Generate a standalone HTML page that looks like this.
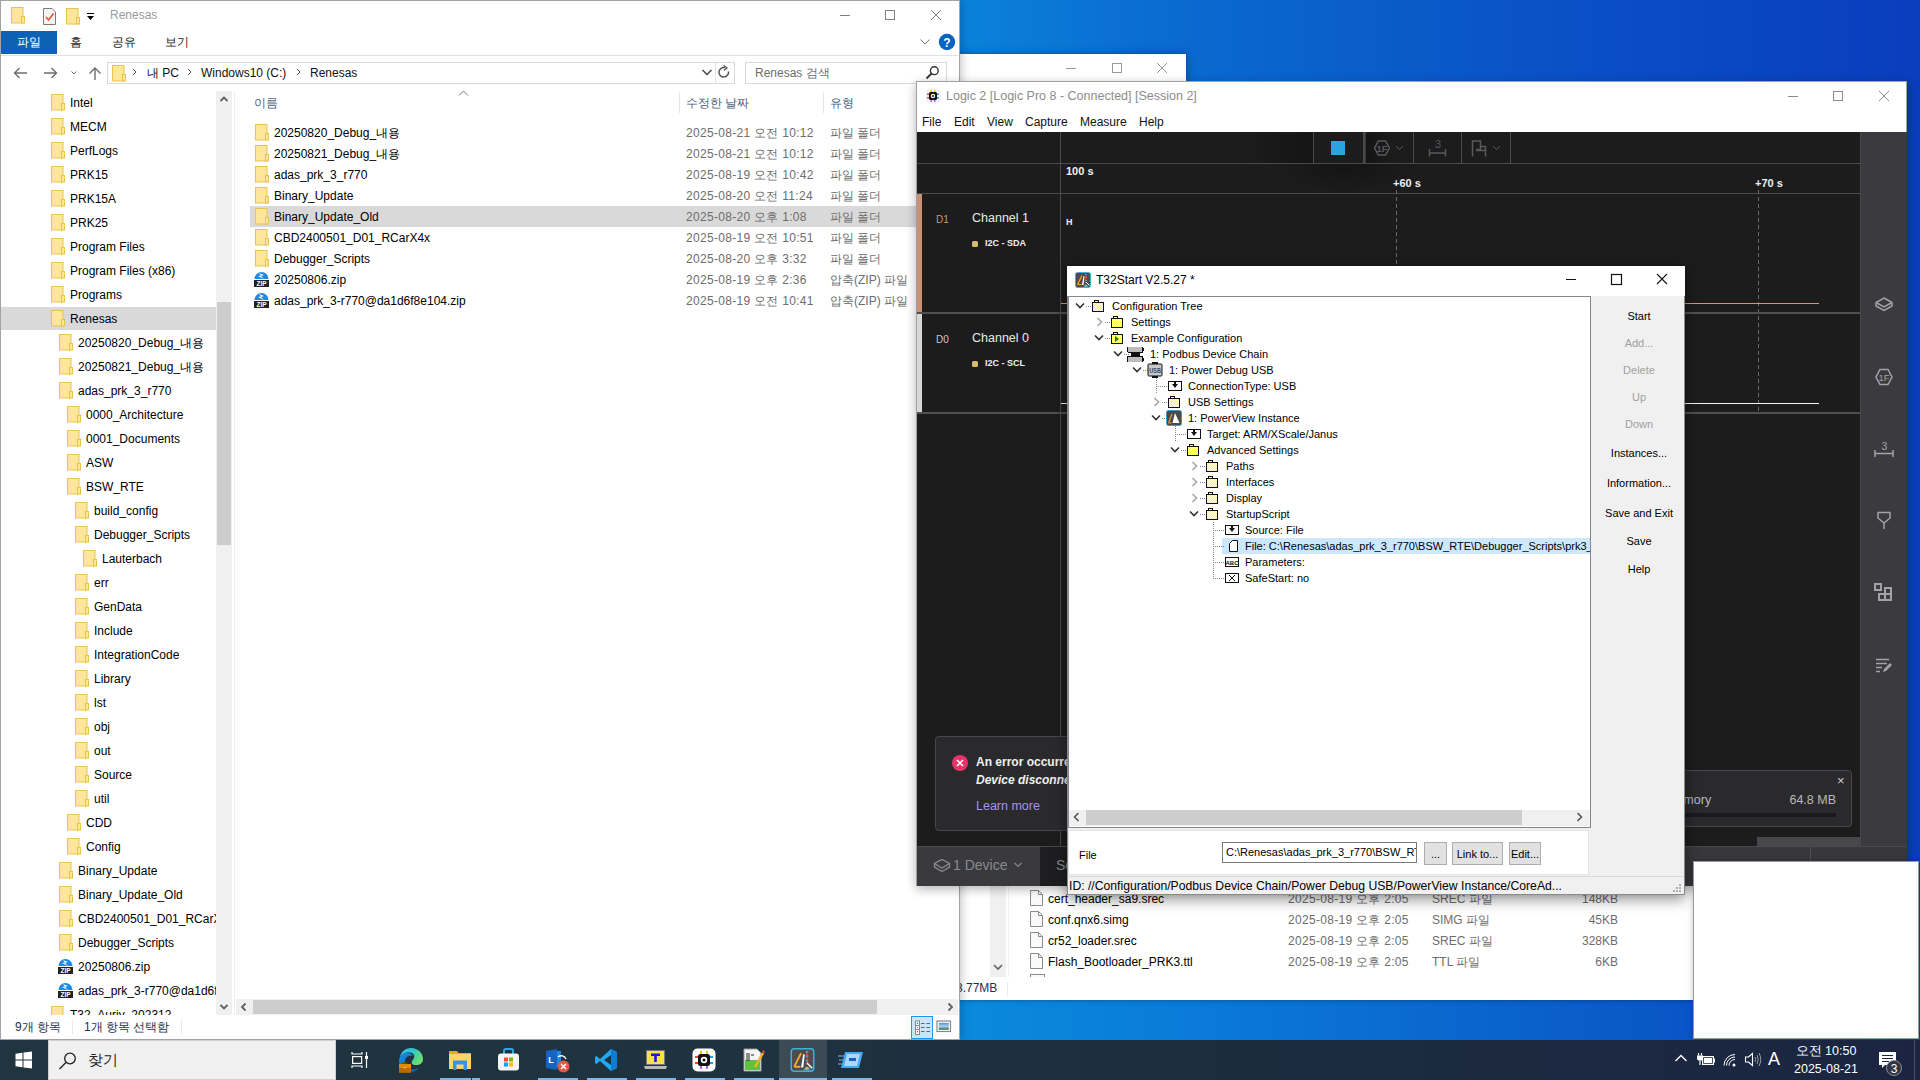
<!DOCTYPE html><html><head><meta charset="utf-8"><style>
html,body{margin:0;padding:0}
body{width:1920px;height:1080px;position:relative;overflow:hidden;font-family:"Liberation Sans", sans-serif;background:linear-gradient(90deg,#0a84db 0%,#0a82da 50%,#0a6cd1 60%,#0a5cca 72%,#0a4cc4 85%,#0a3dbd 100%)}
.a{position:absolute}
.t{position:absolute;white-space:nowrap;line-height:1}
</style></head><body>
<div class="a" style="left:960px;top:960px;width:960px;height:80px;background:linear-gradient(90deg,#0a8add 0%,#0a7ad8 25%,#0a64cd 55%,#0a4ec4 85%,#0a44c0 100%)"></div>
<div class="a" style="left:700px;top:54px;width:486px;height:400px;background:#fff;box-shadow:0 0 8px rgba(0,0,0,.35)">
</div>
<svg class="a" style="left:1060px;top:61px" width="120" height="14" viewBox="0 0 120 14"><path d="M6 7.5 H16" stroke="#999" stroke-width="1"/><rect x="52.5" y="2.5" width="9" height="9" fill="none" stroke="#999"/><path d="M97 2 L107 12 M107 2 L97 12" stroke="#999" stroke-width="1"/></svg>
<div class="a" style="left:700px;top:600px;width:993px;height:400px;background:#fff;box-shadow:0 1px 4px rgba(0,0,0,.25)">
</div>
<div class="a" style="left:990px;top:880px;width:16px;height:97px;background:#f0f0f0"></div>
<svg class="a" style="left:992px;top:963px" width="12" height="10" viewBox="0 0 12 10"><path d="M2 2 L6 6 L10 2" fill="none" stroke="#606060" stroke-width="1.6"/></svg>
<div class="a" style="left:1008px;top:880px;width:1px;height:97px;background:#f0f0f0"></div>
<svg style="position:absolute;left:1030px;top:890px" width="13" height="16" viewBox="0 0 13 16"><path d="M0.5 0.5 H8.5 L12.5 4.5 V15.5 H0.5 Z" fill="#fafafa" stroke="#8a8a8a"/><path d="M8.5 0.5 V4.5 H12.5" fill="none" stroke="#8a8a8a"/></svg>
<div style="position:absolute;left:1048px;top:893px;font-size:12px;color:#000;white-space:nowrap;line-height:1;">cert_header_sa9.srec</div>
<div style="position:absolute;left:1288px;top:893px;font-size:12px;color:#6d6d6d;white-space:nowrap;line-height:1;letter-spacing:0.3px">2025-08-19 오후 2:05</div>
<div style="position:absolute;left:1432px;top:893px;font-size:12px;color:#6d6d6d;white-space:nowrap;line-height:1;">SREC 파일</div>
<div class="t" style="left:1500px;width:118px;text-align:right;top:893px;font-size:12px;color:#6d6d6d">148KB</div>
<svg style="position:absolute;left:1030px;top:911px" width="13" height="16" viewBox="0 0 13 16"><path d="M0.5 0.5 H8.5 L12.5 4.5 V15.5 H0.5 Z" fill="#fafafa" stroke="#8a8a8a"/><path d="M8.5 0.5 V4.5 H12.5" fill="none" stroke="#8a8a8a"/></svg>
<div style="position:absolute;left:1048px;top:914px;font-size:12px;color:#000;white-space:nowrap;line-height:1;">conf.qnx6.simg</div>
<div style="position:absolute;left:1288px;top:914px;font-size:12px;color:#6d6d6d;white-space:nowrap;line-height:1;letter-spacing:0.3px">2025-08-19 오후 2:05</div>
<div style="position:absolute;left:1432px;top:914px;font-size:12px;color:#6d6d6d;white-space:nowrap;line-height:1;">SIMG 파일</div>
<div class="t" style="left:1500px;width:118px;text-align:right;top:914px;font-size:12px;color:#6d6d6d">45KB</div>
<svg style="position:absolute;left:1030px;top:932px" width="13" height="16" viewBox="0 0 13 16"><path d="M0.5 0.5 H8.5 L12.5 4.5 V15.5 H0.5 Z" fill="#fafafa" stroke="#8a8a8a"/><path d="M8.5 0.5 V4.5 H12.5" fill="none" stroke="#8a8a8a"/></svg>
<div style="position:absolute;left:1048px;top:935px;font-size:12px;color:#000;white-space:nowrap;line-height:1;">cr52_loader.srec</div>
<div style="position:absolute;left:1288px;top:935px;font-size:12px;color:#6d6d6d;white-space:nowrap;line-height:1;letter-spacing:0.3px">2025-08-19 오후 2:05</div>
<div style="position:absolute;left:1432px;top:935px;font-size:12px;color:#6d6d6d;white-space:nowrap;line-height:1;">SREC 파일</div>
<div class="t" style="left:1500px;width:118px;text-align:right;top:935px;font-size:12px;color:#6d6d6d">328KB</div>
<svg style="position:absolute;left:1030px;top:953px" width="13" height="16" viewBox="0 0 13 16"><path d="M0.5 0.5 H8.5 L12.5 4.5 V15.5 H0.5 Z" fill="#fafafa" stroke="#8a8a8a"/><path d="M8.5 0.5 V4.5 H12.5" fill="none" stroke="#8a8a8a"/></svg>
<div style="position:absolute;left:1048px;top:956px;font-size:12px;color:#000;white-space:nowrap;line-height:1;">Flash_Bootloader_PRK3.ttl</div>
<div style="position:absolute;left:1288px;top:956px;font-size:12px;color:#6d6d6d;white-space:nowrap;line-height:1;letter-spacing:0.3px">2025-08-19 오후 2:05</div>
<div style="position:absolute;left:1432px;top:956px;font-size:12px;color:#6d6d6d;white-space:nowrap;line-height:1;">TTL 파일</div>
<div class="t" style="left:1500px;width:118px;text-align:right;top:956px;font-size:12px;color:#6d6d6d">6KB</div>
<div class="a" style="left:1030px;top:974px;width:13px;height:3px;border:1px solid #8a8a8a;border-bottom:none;background:#fafafa"></div>
<div class="a" style="left:960px;top:977px;width:733px;height:23px;background:#fff"></div>
<div style="position:absolute;left:956px;top:982px;font-size:12px;color:#1e3250;white-space:nowrap;line-height:1;">3.77MB</div>
<div class="a" style="left:1007px;top:982px;width:1px;height:14px;background:#eaeaea"></div>
<div class="a" style="left:0;top:0;width:958px;height:1038px;background:#fff;border:1px solid #a3a3a3;box-shadow:0 0 10px rgba(0,0,0,.3)"></div>
<svg style="position:absolute;left:11px;top:7px" width="14" height="17" viewBox="0 0 14 17"><rect x="0.5" y="0.5" width="11.5" height="15.5" fill="#fde69a" stroke="#e9c44c"/><rect x="10.5" y="9.5" width="3" height="6.5" fill="#fde69a" stroke="#e9c44c"/></svg>
<svg class="a" style="left:43px;top:8px" width="14" height="17" viewBox="0 0 14 17"><path d="M0.5 0.5 H9 L12.5 4 V16.5 H0.5 Z" fill="#f4f4f4" stroke="#7a7a7a"/><path d="M3 9 L5.5 12 L10.5 5.5" fill="none" stroke="#e8542a" stroke-width="1.6"/></svg>
<svg style="position:absolute;left:66px;top:8px" width="14" height="17" viewBox="0 0 14 17"><rect x="0.5" y="0.5" width="11.5" height="15.5" fill="#fde69a" stroke="#e9c44c"/><rect x="10.5" y="9.5" width="3" height="6.5" fill="#fde69a" stroke="#e9c44c"/></svg>
<svg class="a" style="left:86px;top:12px" width="9" height="9" viewBox="0 0 9 9"><path d="M1 1.5 H8" stroke="#000" stroke-width="1"/><path d="M1 4 H8 L4.5 8 Z" fill="#000"/></svg>
<div style="position:absolute;left:110px;top:9px;font-size:12px;color:#9a9a9a;white-space:nowrap;line-height:1;">Renesas</div>
<svg class="a" style="left:830px;top:8px" width="120" height="16" viewBox="0 0 120 16"><path d="M10 7.5 H20" stroke="#808080" stroke-width="1"/><rect x="55.5" y="2.5" width="9" height="9" fill="none" stroke="#808080"/><path d="M101 2 L111 12 M111 2 L101 12" stroke="#808080" stroke-width="1"/></svg>
<div class="a" style="left:1px;top:31px;width:56px;height:23px;background:#0f61b6"></div>
<div style="position:absolute;left:17px;top:36px;font-size:12px;color:#fff;white-space:nowrap;line-height:1;">파일</div>
<div style="position:absolute;left:70px;top:36px;font-size:12px;color:#222;white-space:nowrap;line-height:1;">홈</div>
<div style="position:absolute;left:112px;top:36px;font-size:12px;color:#222;white-space:nowrap;line-height:1;">공유</div>
<div style="position:absolute;left:165px;top:36px;font-size:12px;color:#222;white-space:nowrap;line-height:1;">보기</div>
<div class="a" style="left:1px;top:55px;width:957px;height:1px;background:#e1e1e1"></div>
<svg class="a" style="left:919px;top:37px" width="12" height="10" viewBox="0 0 12 10"><path d="M1.5 2.5 L6 7 L10.5 2.5" fill="none" stroke="#707070" stroke-width="1"/></svg>
<svg class="a" style="left:938px;top:33px" width="18" height="18" viewBox="0 0 18 18"><circle cx="9" cy="9" r="8.2" fill="#0b63c1"/><text x="9" y="13.5" font-size="12" font-weight="bold" fill="#fff" text-anchor="middle" font-family="Liberation Sans">?</text></svg>
<svg class="a" style="left:11px;top:65px" width="95" height="16" viewBox="0 0 95 16"><path d="M3.5 8 H16 M8.5 3 L3.5 8 L8.5 13" fill="none" stroke="#6d6d6d" stroke-width="1.4"/><path d="M33 8 H45.5 M40.5 3 L45.5 8 L40.5 13" fill="none" stroke="#6d6d6d" stroke-width="1.4"/><path d="M60.5 6.5 L63 9 L65.5 6.5" fill="none" stroke="#6d6d6d" stroke-width="1"/><path d="M84 15 V3 M78.5 8.5 L84 3 L89.5 8.5" fill="none" stroke="#6d6d6d" stroke-width="1.4"/></svg>
<div class="a" style="left:107px;top:62px;width:626px;height:20px;border:1px solid #d9d9d9;background:#fff"></div>
<div class="a" style="left:715px;top:63px;width:1px;height:20px;background:#e3e3e3"></div>
<svg style="position:absolute;left:112px;top:65px" width="14" height="17" viewBox="0 0 14 17"><rect x="0.5" y="0.5" width="11.5" height="15.5" fill="#fde69a" stroke="#e9c44c"/><rect x="10.5" y="9.5" width="3" height="6.5" fill="#fde69a" stroke="#e9c44c"/></svg>
<svg class="a" style="left:130px;top:66px" width="180" height="12" viewBox="0 0 180 12"><path d="M3 3 L6 6 L3 9" fill="none" stroke="#555" stroke-width="1"/><path d="M58 3 L61 6 L58 9" fill="none" stroke="#555" stroke-width="1"/><path d="M167 3 L170 6 L167 9" fill="none" stroke="#555" stroke-width="1"/></svg>
<div style="position:absolute;left:147px;top:67px;font-size:12px;color:#111;white-space:nowrap;line-height:1;">내 PC</div>
<div style="position:absolute;left:201px;top:67px;font-size:12px;color:#111;white-space:nowrap;line-height:1;">Windows10 (C:)</div>
<div style="position:absolute;left:310px;top:67px;font-size:12px;color:#111;white-space:nowrap;line-height:1;">Renesas</div>
<svg class="a" style="left:701px;top:68px" width="12" height="10" viewBox="0 0 12 10"><path d="M1.5 2 L6 6.5 L10.5 2" fill="none" stroke="#444" stroke-width="1.5"/></svg>
<svg class="a" style="left:717px;top:65px" width="15" height="15" viewBox="0 0 15 15"><path d="M11.5 6.5 A4.8 4.8 0 1 1 8 2.6" fill="none" stroke="#555" stroke-width="1.5"/><path d="M6.5 0.5 L10 2.8 L7 5.5" fill="none" stroke="#555" stroke-width="1.3"/></svg>
<div class="a" style="left:745px;top:62px;width:200px;height:20px;border:1px solid #d9d9d9;background:#fff"></div>
<div style="position:absolute;left:755px;top:67px;font-size:12px;color:#6d6d6d;white-space:nowrap;line-height:1;">Renesas 검색</div>
<svg class="a" style="left:925px;top:65px" width="15" height="15" viewBox="0 0 15 15"><circle cx="9.3" cy="5.7" r="3.9" fill="none" stroke="#333" stroke-width="1.4"/><path d="M6.5 8.5 L1.5 13.5" stroke="#333" stroke-width="1.8"/></svg>
<div class="a" style="left:1px;top:91px;width:215px;height:924px;overflow:hidden">
<svg style="position:absolute;left:50px;top:3px" width="14" height="17" viewBox="0 0 14 17"><rect x="0.5" y="0.5" width="11.5" height="15.5" fill="#fde69a" stroke="#e9c44c"/><rect x="10.5" y="9.5" width="3" height="6.5" fill="#fde69a" stroke="#e9c44c"/></svg>
<div style="position:absolute;left:69px;top:6px;font-size:12px;color:#000;white-space:nowrap;line-height:1;">Intel</div>
<svg style="position:absolute;left:50px;top:27px" width="14" height="17" viewBox="0 0 14 17"><rect x="0.5" y="0.5" width="11.5" height="15.5" fill="#fde69a" stroke="#e9c44c"/><rect x="10.5" y="9.5" width="3" height="6.5" fill="#fde69a" stroke="#e9c44c"/></svg>
<div style="position:absolute;left:69px;top:30px;font-size:12px;color:#000;white-space:nowrap;line-height:1;">MECM</div>
<svg style="position:absolute;left:50px;top:51px" width="14" height="17" viewBox="0 0 14 17"><rect x="0.5" y="0.5" width="11.5" height="15.5" fill="#fde69a" stroke="#e9c44c"/><rect x="10.5" y="9.5" width="3" height="6.5" fill="#fde69a" stroke="#e9c44c"/></svg>
<div style="position:absolute;left:69px;top:54px;font-size:12px;color:#000;white-space:nowrap;line-height:1;">PerfLogs</div>
<svg style="position:absolute;left:50px;top:75px" width="14" height="17" viewBox="0 0 14 17"><rect x="0.5" y="0.5" width="11.5" height="15.5" fill="#fde69a" stroke="#e9c44c"/><rect x="10.5" y="9.5" width="3" height="6.5" fill="#fde69a" stroke="#e9c44c"/></svg>
<div style="position:absolute;left:69px;top:78px;font-size:12px;color:#000;white-space:nowrap;line-height:1;">PRK15</div>
<svg style="position:absolute;left:50px;top:99px" width="14" height="17" viewBox="0 0 14 17"><rect x="0.5" y="0.5" width="11.5" height="15.5" fill="#fde69a" stroke="#e9c44c"/><rect x="10.5" y="9.5" width="3" height="6.5" fill="#fde69a" stroke="#e9c44c"/></svg>
<div style="position:absolute;left:69px;top:102px;font-size:12px;color:#000;white-space:nowrap;line-height:1;">PRK15A</div>
<svg style="position:absolute;left:50px;top:123px" width="14" height="17" viewBox="0 0 14 17"><rect x="0.5" y="0.5" width="11.5" height="15.5" fill="#fde69a" stroke="#e9c44c"/><rect x="10.5" y="9.5" width="3" height="6.5" fill="#fde69a" stroke="#e9c44c"/></svg>
<div style="position:absolute;left:69px;top:126px;font-size:12px;color:#000;white-space:nowrap;line-height:1;">PRK25</div>
<svg style="position:absolute;left:50px;top:147px" width="14" height="17" viewBox="0 0 14 17"><rect x="0.5" y="0.5" width="11.5" height="15.5" fill="#fde69a" stroke="#e9c44c"/><rect x="10.5" y="9.5" width="3" height="6.5" fill="#fde69a" stroke="#e9c44c"/></svg>
<div style="position:absolute;left:69px;top:150px;font-size:12px;color:#000;white-space:nowrap;line-height:1;">Program Files</div>
<svg style="position:absolute;left:50px;top:171px" width="14" height="17" viewBox="0 0 14 17"><rect x="0.5" y="0.5" width="11.5" height="15.5" fill="#fde69a" stroke="#e9c44c"/><rect x="10.5" y="9.5" width="3" height="6.5" fill="#fde69a" stroke="#e9c44c"/></svg>
<div style="position:absolute;left:69px;top:174px;font-size:12px;color:#000;white-space:nowrap;line-height:1;">Program Files (x86)</div>
<svg style="position:absolute;left:50px;top:195px" width="14" height="17" viewBox="0 0 14 17"><rect x="0.5" y="0.5" width="11.5" height="15.5" fill="#fde69a" stroke="#e9c44c"/><rect x="10.5" y="9.5" width="3" height="6.5" fill="#fde69a" stroke="#e9c44c"/></svg>
<div style="position:absolute;left:69px;top:198px;font-size:12px;color:#000;white-space:nowrap;line-height:1;">Programs</div>
<div class="a" style="left:0;top:216px;width:215px;height:23px;background:#d9d9d9"></div>
<svg style="position:absolute;left:50px;top:219px" width="14" height="17" viewBox="0 0 14 17"><rect x="0.5" y="0.5" width="11.5" height="15.5" fill="#fde69a" stroke="#e9c44c"/><rect x="10.5" y="9.5" width="3" height="6.5" fill="#fde69a" stroke="#e9c44c"/></svg>
<div style="position:absolute;left:69px;top:222px;font-size:12px;color:#000;white-space:nowrap;line-height:1;">Renesas</div>
<svg style="position:absolute;left:58px;top:243px" width="14" height="17" viewBox="0 0 14 17"><rect x="0.5" y="0.5" width="11.5" height="15.5" fill="#fde69a" stroke="#e9c44c"/><rect x="10.5" y="9.5" width="3" height="6.5" fill="#fde69a" stroke="#e9c44c"/></svg>
<div style="position:absolute;left:77px;top:246px;font-size:12px;color:#000;white-space:nowrap;line-height:1;">20250820_Debug_내용</div>
<svg style="position:absolute;left:58px;top:267px" width="14" height="17" viewBox="0 0 14 17"><rect x="0.5" y="0.5" width="11.5" height="15.5" fill="#fde69a" stroke="#e9c44c"/><rect x="10.5" y="9.5" width="3" height="6.5" fill="#fde69a" stroke="#e9c44c"/></svg>
<div style="position:absolute;left:77px;top:270px;font-size:12px;color:#000;white-space:nowrap;line-height:1;">20250821_Debug_내용</div>
<svg style="position:absolute;left:58px;top:291px" width="14" height="17" viewBox="0 0 14 17"><rect x="0.5" y="0.5" width="11.5" height="15.5" fill="#fde69a" stroke="#e9c44c"/><rect x="10.5" y="9.5" width="3" height="6.5" fill="#fde69a" stroke="#e9c44c"/></svg>
<div style="position:absolute;left:77px;top:294px;font-size:12px;color:#000;white-space:nowrap;line-height:1;">adas_prk_3_r770</div>
<svg style="position:absolute;left:66px;top:315px" width="14" height="17" viewBox="0 0 14 17"><rect x="0.5" y="0.5" width="11.5" height="15.5" fill="#fde69a" stroke="#e9c44c"/><rect x="10.5" y="9.5" width="3" height="6.5" fill="#fde69a" stroke="#e9c44c"/></svg>
<div style="position:absolute;left:85px;top:318px;font-size:12px;color:#000;white-space:nowrap;line-height:1;">0000_Architecture</div>
<svg style="position:absolute;left:66px;top:339px" width="14" height="17" viewBox="0 0 14 17"><rect x="0.5" y="0.5" width="11.5" height="15.5" fill="#fde69a" stroke="#e9c44c"/><rect x="10.5" y="9.5" width="3" height="6.5" fill="#fde69a" stroke="#e9c44c"/></svg>
<div style="position:absolute;left:85px;top:342px;font-size:12px;color:#000;white-space:nowrap;line-height:1;">0001_Documents</div>
<svg style="position:absolute;left:66px;top:363px" width="14" height="17" viewBox="0 0 14 17"><rect x="0.5" y="0.5" width="11.5" height="15.5" fill="#fde69a" stroke="#e9c44c"/><rect x="10.5" y="9.5" width="3" height="6.5" fill="#fde69a" stroke="#e9c44c"/></svg>
<div style="position:absolute;left:85px;top:366px;font-size:12px;color:#000;white-space:nowrap;line-height:1;">ASW</div>
<svg style="position:absolute;left:66px;top:387px" width="14" height="17" viewBox="0 0 14 17"><rect x="0.5" y="0.5" width="11.5" height="15.5" fill="#fde69a" stroke="#e9c44c"/><rect x="10.5" y="9.5" width="3" height="6.5" fill="#fde69a" stroke="#e9c44c"/></svg>
<div style="position:absolute;left:85px;top:390px;font-size:12px;color:#000;white-space:nowrap;line-height:1;">BSW_RTE</div>
<svg style="position:absolute;left:74px;top:411px" width="14" height="17" viewBox="0 0 14 17"><rect x="0.5" y="0.5" width="11.5" height="15.5" fill="#fde69a" stroke="#e9c44c"/><rect x="10.5" y="9.5" width="3" height="6.5" fill="#fde69a" stroke="#e9c44c"/></svg>
<div style="position:absolute;left:93px;top:414px;font-size:12px;color:#000;white-space:nowrap;line-height:1;">build_config</div>
<svg style="position:absolute;left:74px;top:435px" width="14" height="17" viewBox="0 0 14 17"><rect x="0.5" y="0.5" width="11.5" height="15.5" fill="#fde69a" stroke="#e9c44c"/><rect x="10.5" y="9.5" width="3" height="6.5" fill="#fde69a" stroke="#e9c44c"/></svg>
<div style="position:absolute;left:93px;top:438px;font-size:12px;color:#000;white-space:nowrap;line-height:1;">Debugger_Scripts</div>
<svg style="position:absolute;left:82px;top:459px" width="14" height="17" viewBox="0 0 14 17"><rect x="0.5" y="0.5" width="11.5" height="15.5" fill="#fde69a" stroke="#e9c44c"/><rect x="10.5" y="9.5" width="3" height="6.5" fill="#fde69a" stroke="#e9c44c"/></svg>
<div style="position:absolute;left:101px;top:462px;font-size:12px;color:#000;white-space:nowrap;line-height:1;">Lauterbach</div>
<svg style="position:absolute;left:74px;top:483px" width="14" height="17" viewBox="0 0 14 17"><rect x="0.5" y="0.5" width="11.5" height="15.5" fill="#fde69a" stroke="#e9c44c"/><rect x="10.5" y="9.5" width="3" height="6.5" fill="#fde69a" stroke="#e9c44c"/></svg>
<div style="position:absolute;left:93px;top:486px;font-size:12px;color:#000;white-space:nowrap;line-height:1;">err</div>
<svg style="position:absolute;left:74px;top:507px" width="14" height="17" viewBox="0 0 14 17"><rect x="0.5" y="0.5" width="11.5" height="15.5" fill="#fde69a" stroke="#e9c44c"/><rect x="10.5" y="9.5" width="3" height="6.5" fill="#fde69a" stroke="#e9c44c"/></svg>
<div style="position:absolute;left:93px;top:510px;font-size:12px;color:#000;white-space:nowrap;line-height:1;">GenData</div>
<svg style="position:absolute;left:74px;top:531px" width="14" height="17" viewBox="0 0 14 17"><rect x="0.5" y="0.5" width="11.5" height="15.5" fill="#fde69a" stroke="#e9c44c"/><rect x="10.5" y="9.5" width="3" height="6.5" fill="#fde69a" stroke="#e9c44c"/></svg>
<div style="position:absolute;left:93px;top:534px;font-size:12px;color:#000;white-space:nowrap;line-height:1;">Include</div>
<svg style="position:absolute;left:74px;top:555px" width="14" height="17" viewBox="0 0 14 17"><rect x="0.5" y="0.5" width="11.5" height="15.5" fill="#fde69a" stroke="#e9c44c"/><rect x="10.5" y="9.5" width="3" height="6.5" fill="#fde69a" stroke="#e9c44c"/></svg>
<div style="position:absolute;left:93px;top:558px;font-size:12px;color:#000;white-space:nowrap;line-height:1;">IntegrationCode</div>
<svg style="position:absolute;left:74px;top:579px" width="14" height="17" viewBox="0 0 14 17"><rect x="0.5" y="0.5" width="11.5" height="15.5" fill="#fde69a" stroke="#e9c44c"/><rect x="10.5" y="9.5" width="3" height="6.5" fill="#fde69a" stroke="#e9c44c"/></svg>
<div style="position:absolute;left:93px;top:582px;font-size:12px;color:#000;white-space:nowrap;line-height:1;">Library</div>
<svg style="position:absolute;left:74px;top:603px" width="14" height="17" viewBox="0 0 14 17"><rect x="0.5" y="0.5" width="11.5" height="15.5" fill="#fde69a" stroke="#e9c44c"/><rect x="10.5" y="9.5" width="3" height="6.5" fill="#fde69a" stroke="#e9c44c"/></svg>
<div style="position:absolute;left:93px;top:606px;font-size:12px;color:#000;white-space:nowrap;line-height:1;">lst</div>
<svg style="position:absolute;left:74px;top:627px" width="14" height="17" viewBox="0 0 14 17"><rect x="0.5" y="0.5" width="11.5" height="15.5" fill="#fde69a" stroke="#e9c44c"/><rect x="10.5" y="9.5" width="3" height="6.5" fill="#fde69a" stroke="#e9c44c"/></svg>
<div style="position:absolute;left:93px;top:630px;font-size:12px;color:#000;white-space:nowrap;line-height:1;">obj</div>
<svg style="position:absolute;left:74px;top:651px" width="14" height="17" viewBox="0 0 14 17"><rect x="0.5" y="0.5" width="11.5" height="15.5" fill="#fde69a" stroke="#e9c44c"/><rect x="10.5" y="9.5" width="3" height="6.5" fill="#fde69a" stroke="#e9c44c"/></svg>
<div style="position:absolute;left:93px;top:654px;font-size:12px;color:#000;white-space:nowrap;line-height:1;">out</div>
<svg style="position:absolute;left:74px;top:675px" width="14" height="17" viewBox="0 0 14 17"><rect x="0.5" y="0.5" width="11.5" height="15.5" fill="#fde69a" stroke="#e9c44c"/><rect x="10.5" y="9.5" width="3" height="6.5" fill="#fde69a" stroke="#e9c44c"/></svg>
<div style="position:absolute;left:93px;top:678px;font-size:12px;color:#000;white-space:nowrap;line-height:1;">Source</div>
<svg style="position:absolute;left:74px;top:699px" width="14" height="17" viewBox="0 0 14 17"><rect x="0.5" y="0.5" width="11.5" height="15.5" fill="#fde69a" stroke="#e9c44c"/><rect x="10.5" y="9.5" width="3" height="6.5" fill="#fde69a" stroke="#e9c44c"/></svg>
<div style="position:absolute;left:93px;top:702px;font-size:12px;color:#000;white-space:nowrap;line-height:1;">util</div>
<svg style="position:absolute;left:66px;top:723px" width="14" height="17" viewBox="0 0 14 17"><rect x="0.5" y="0.5" width="11.5" height="15.5" fill="#fde69a" stroke="#e9c44c"/><rect x="10.5" y="9.5" width="3" height="6.5" fill="#fde69a" stroke="#e9c44c"/></svg>
<div style="position:absolute;left:85px;top:726px;font-size:12px;color:#000;white-space:nowrap;line-height:1;">CDD</div>
<svg style="position:absolute;left:66px;top:747px" width="14" height="17" viewBox="0 0 14 17"><rect x="0.5" y="0.5" width="11.5" height="15.5" fill="#fde69a" stroke="#e9c44c"/><rect x="10.5" y="9.5" width="3" height="6.5" fill="#fde69a" stroke="#e9c44c"/></svg>
<div style="position:absolute;left:85px;top:750px;font-size:12px;color:#000;white-space:nowrap;line-height:1;">Config</div>
<svg style="position:absolute;left:58px;top:771px" width="14" height="17" viewBox="0 0 14 17"><rect x="0.5" y="0.5" width="11.5" height="15.5" fill="#fde69a" stroke="#e9c44c"/><rect x="10.5" y="9.5" width="3" height="6.5" fill="#fde69a" stroke="#e9c44c"/></svg>
<div style="position:absolute;left:77px;top:774px;font-size:12px;color:#000;white-space:nowrap;line-height:1;">Binary_Update</div>
<svg style="position:absolute;left:58px;top:795px" width="14" height="17" viewBox="0 0 14 17"><rect x="0.5" y="0.5" width="11.5" height="15.5" fill="#fde69a" stroke="#e9c44c"/><rect x="10.5" y="9.5" width="3" height="6.5" fill="#fde69a" stroke="#e9c44c"/></svg>
<div style="position:absolute;left:77px;top:798px;font-size:12px;color:#000;white-space:nowrap;line-height:1;">Binary_Update_Old</div>
<svg style="position:absolute;left:58px;top:819px" width="14" height="17" viewBox="0 0 14 17"><rect x="0.5" y="0.5" width="11.5" height="15.5" fill="#fde69a" stroke="#e9c44c"/><rect x="10.5" y="9.5" width="3" height="6.5" fill="#fde69a" stroke="#e9c44c"/></svg>
<div style="position:absolute;left:77px;top:822px;font-size:12px;color:#000;white-space:nowrap;line-height:1;">CBD2400501_D01_RCarX4x</div>
<svg style="position:absolute;left:58px;top:843px" width="14" height="17" viewBox="0 0 14 17"><rect x="0.5" y="0.5" width="11.5" height="15.5" fill="#fde69a" stroke="#e9c44c"/><rect x="10.5" y="9.5" width="3" height="6.5" fill="#fde69a" stroke="#e9c44c"/></svg>
<div style="position:absolute;left:77px;top:846px;font-size:12px;color:#000;white-space:nowrap;line-height:1;">Debugger_Scripts</div>
<svg style="position:absolute;left:56px;top:866px" width="17" height="17" viewBox="0 0 17 17"><path d="M1.5 9 A7 7 0 0 1 15.5 9 Z" fill="#1e88e5"/><path d="M6 3 L11 5 L8 6 L11 9 L5 6 L8 5.5 Z" fill="#fff"/><rect x="1" y="10" width="15" height="7" fill="#222"/><text x="8.5" y="16" font-size="6.5" font-weight="bold" fill="#fff" text-anchor="middle" font-family="Liberation Sans">ZIP</text></svg>
<div style="position:absolute;left:77px;top:870px;font-size:12px;color:#000;white-space:nowrap;line-height:1;">20250806.zip</div>
<svg style="position:absolute;left:56px;top:890px" width="17" height="17" viewBox="0 0 17 17"><path d="M1.5 9 A7 7 0 0 1 15.5 9 Z" fill="#1e88e5"/><path d="M6 3 L11 5 L8 6 L11 9 L5 6 L8 5.5 Z" fill="#fff"/><rect x="1" y="10" width="15" height="7" fill="#222"/><text x="8.5" y="16" font-size="6.5" font-weight="bold" fill="#fff" text-anchor="middle" font-family="Liberation Sans">ZIP</text></svg>
<div style="position:absolute;left:77px;top:894px;font-size:12px;color:#000;white-space:nowrap;line-height:1;">adas_prk_3-r770@da1d6f8e104.zip</div>
<svg style="position:absolute;left:50px;top:915px" width="14" height="17" viewBox="0 0 14 17"><rect x="0.5" y="0.5" width="11.5" height="15.5" fill="#fde69a" stroke="#e9c44c"/><rect x="10.5" y="9.5" width="3" height="6.5" fill="#fde69a" stroke="#e9c44c"/></svg>
<div style="position:absolute;left:69px;top:918px;font-size:12px;color:#000;white-space:nowrap;line-height:1;">T32_Auriv_202312</div>
</div>
<div class="a" style="left:216px;top:91px;width:16px;height:924px;background:#f0f0f0"></div>
<div class="a" style="left:217px;top:302px;width:14px;height:243px;background:#cdcdcd"></div>
<svg class="a" style="left:219px;top:94px" width="10" height="10" viewBox="0 0 10 10"><path d="M1.5 7 L5 3.5 L8.5 7" fill="none" stroke="#606060" stroke-width="1.8"/></svg>
<svg class="a" style="left:219px;top:1002px" width="10" height="10" viewBox="0 0 10 10"><path d="M1.5 3 L5 6.5 L8.5 3" fill="none" stroke="#606060" stroke-width="1.8"/></svg>
<div class="a" style="left:234px;top:91px;width:1px;height:924px;background:#f0f0f0"></div>
<div style="position:absolute;left:254px;top:97px;font-size:12px;color:#4c607a;white-space:nowrap;line-height:1;">이름</div>
<svg class="a" style="left:458px;top:90px" width="11" height="7" viewBox="0 0 11 7"><path d="M1 5.5 L5.5 1 L10 5.5" fill="none" stroke="#777" stroke-width="1"/></svg>
<div class="a" style="left:679px;top:92px;width:1px;height:21px;background:#e5e5e5"></div>
<div style="position:absolute;left:686px;top:97px;font-size:12px;color:#4c607a;white-space:nowrap;line-height:1;">수정한 날짜</div>
<div class="a" style="left:823px;top:92px;width:1px;height:21px;background:#e5e5e5"></div>
<div style="position:absolute;left:830px;top:97px;font-size:12px;color:#4c607a;white-space:nowrap;line-height:1;">유형</div>
<svg style="position:absolute;left:255px;top:124px" width="14" height="17" viewBox="0 0 14 17"><rect x="0.5" y="0.5" width="11.5" height="15.5" fill="#fde69a" stroke="#e9c44c"/><rect x="10.5" y="9.5" width="3" height="6.5" fill="#fde69a" stroke="#e9c44c"/></svg>
<div style="position:absolute;left:274px;top:127px;font-size:12px;color:#000;white-space:nowrap;line-height:1;">20250820_Debug_내용</div>
<div style="position:absolute;left:686px;top:127px;font-size:12px;color:#6d6d6d;white-space:nowrap;line-height:1;letter-spacing:0.3px">2025-08-21 오전 10:12</div>
<div style="position:absolute;left:830px;top:127px;font-size:12px;color:#6d6d6d;white-space:nowrap;line-height:1;">파일 폴더</div>
<svg style="position:absolute;left:255px;top:145px" width="14" height="17" viewBox="0 0 14 17"><rect x="0.5" y="0.5" width="11.5" height="15.5" fill="#fde69a" stroke="#e9c44c"/><rect x="10.5" y="9.5" width="3" height="6.5" fill="#fde69a" stroke="#e9c44c"/></svg>
<div style="position:absolute;left:274px;top:148px;font-size:12px;color:#000;white-space:nowrap;line-height:1;">20250821_Debug_내용</div>
<div style="position:absolute;left:686px;top:148px;font-size:12px;color:#6d6d6d;white-space:nowrap;line-height:1;letter-spacing:0.3px">2025-08-21 오전 10:12</div>
<div style="position:absolute;left:830px;top:148px;font-size:12px;color:#6d6d6d;white-space:nowrap;line-height:1;">파일 폴더</div>
<svg style="position:absolute;left:255px;top:166px" width="14" height="17" viewBox="0 0 14 17"><rect x="0.5" y="0.5" width="11.5" height="15.5" fill="#fde69a" stroke="#e9c44c"/><rect x="10.5" y="9.5" width="3" height="6.5" fill="#fde69a" stroke="#e9c44c"/></svg>
<div style="position:absolute;left:274px;top:169px;font-size:12px;color:#000;white-space:nowrap;line-height:1;">adas_prk_3_r770</div>
<div style="position:absolute;left:686px;top:169px;font-size:12px;color:#6d6d6d;white-space:nowrap;line-height:1;letter-spacing:0.3px">2025-08-19 오전 10:42</div>
<div style="position:absolute;left:830px;top:169px;font-size:12px;color:#6d6d6d;white-space:nowrap;line-height:1;">파일 폴더</div>
<svg style="position:absolute;left:255px;top:187px" width="14" height="17" viewBox="0 0 14 17"><rect x="0.5" y="0.5" width="11.5" height="15.5" fill="#fde69a" stroke="#e9c44c"/><rect x="10.5" y="9.5" width="3" height="6.5" fill="#fde69a" stroke="#e9c44c"/></svg>
<div style="position:absolute;left:274px;top:190px;font-size:12px;color:#000;white-space:nowrap;line-height:1;">Binary_Update</div>
<div style="position:absolute;left:686px;top:190px;font-size:12px;color:#6d6d6d;white-space:nowrap;line-height:1;letter-spacing:0.3px">2025-08-20 오전 11:24</div>
<div style="position:absolute;left:830px;top:190px;font-size:12px;color:#6d6d6d;white-space:nowrap;line-height:1;">파일 폴더</div>
<div class="a" style="left:250px;top:206px;width:708px;height:21px;background:#d9d9d9"></div>
<svg style="position:absolute;left:255px;top:208px" width="14" height="17" viewBox="0 0 14 17"><rect x="0.5" y="0.5" width="11.5" height="15.5" fill="#fde69a" stroke="#e9c44c"/><rect x="10.5" y="9.5" width="3" height="6.5" fill="#fde69a" stroke="#e9c44c"/></svg>
<div style="position:absolute;left:274px;top:211px;font-size:12px;color:#000;white-space:nowrap;line-height:1;">Binary_Update_Old</div>
<div style="position:absolute;left:686px;top:211px;font-size:12px;color:#6d6d6d;white-space:nowrap;line-height:1;letter-spacing:0.3px">2025-08-20 오후 1:08</div>
<div style="position:absolute;left:830px;top:211px;font-size:12px;color:#6d6d6d;white-space:nowrap;line-height:1;">파일 폴더</div>
<svg style="position:absolute;left:255px;top:229px" width="14" height="17" viewBox="0 0 14 17"><rect x="0.5" y="0.5" width="11.5" height="15.5" fill="#fde69a" stroke="#e9c44c"/><rect x="10.5" y="9.5" width="3" height="6.5" fill="#fde69a" stroke="#e9c44c"/></svg>
<div style="position:absolute;left:274px;top:232px;font-size:12px;color:#000;white-space:nowrap;line-height:1;">CBD2400501_D01_RCarX4x</div>
<div style="position:absolute;left:686px;top:232px;font-size:12px;color:#6d6d6d;white-space:nowrap;line-height:1;letter-spacing:0.3px">2025-08-19 오전 10:51</div>
<div style="position:absolute;left:830px;top:232px;font-size:12px;color:#6d6d6d;white-space:nowrap;line-height:1;">파일 폴더</div>
<svg style="position:absolute;left:255px;top:250px" width="14" height="17" viewBox="0 0 14 17"><rect x="0.5" y="0.5" width="11.5" height="15.5" fill="#fde69a" stroke="#e9c44c"/><rect x="10.5" y="9.5" width="3" height="6.5" fill="#fde69a" stroke="#e9c44c"/></svg>
<div style="position:absolute;left:274px;top:253px;font-size:12px;color:#000;white-space:nowrap;line-height:1;">Debugger_Scripts</div>
<div style="position:absolute;left:686px;top:253px;font-size:12px;color:#6d6d6d;white-space:nowrap;line-height:1;letter-spacing:0.3px">2025-08-20 오후 3:32</div>
<div style="position:absolute;left:830px;top:253px;font-size:12px;color:#6d6d6d;white-space:nowrap;line-height:1;">파일 폴더</div>
<svg style="position:absolute;left:253px;top:270px" width="17" height="17" viewBox="0 0 17 17"><path d="M1.5 9 A7 7 0 0 1 15.5 9 Z" fill="#1e88e5"/><path d="M6 3 L11 5 L8 6 L11 9 L5 6 L8 5.5 Z" fill="#fff"/><rect x="1" y="10" width="15" height="7" fill="#222"/><text x="8.5" y="16" font-size="6.5" font-weight="bold" fill="#fff" text-anchor="middle" font-family="Liberation Sans">ZIP</text></svg>
<div style="position:absolute;left:274px;top:274px;font-size:12px;color:#000;white-space:nowrap;line-height:1;">20250806.zip</div>
<div style="position:absolute;left:686px;top:274px;font-size:12px;color:#6d6d6d;white-space:nowrap;line-height:1;letter-spacing:0.3px">2025-08-19 오후 2:36</div>
<div style="position:absolute;left:830px;top:274px;font-size:12px;color:#6d6d6d;white-space:nowrap;line-height:1;">압축(ZIP) 파일</div>
<svg style="position:absolute;left:253px;top:291px" width="17" height="17" viewBox="0 0 17 17"><path d="M1.5 9 A7 7 0 0 1 15.5 9 Z" fill="#1e88e5"/><path d="M6 3 L11 5 L8 6 L11 9 L5 6 L8 5.5 Z" fill="#fff"/><rect x="1" y="10" width="15" height="7" fill="#222"/><text x="8.5" y="16" font-size="6.5" font-weight="bold" fill="#fff" text-anchor="middle" font-family="Liberation Sans">ZIP</text></svg>
<div style="position:absolute;left:274px;top:295px;font-size:12px;color:#000;white-space:nowrap;line-height:1;">adas_prk_3-r770@da1d6f8e104.zip</div>
<div style="position:absolute;left:686px;top:295px;font-size:12px;color:#6d6d6d;white-space:nowrap;line-height:1;letter-spacing:0.3px">2025-08-19 오전 10:41</div>
<div style="position:absolute;left:830px;top:295px;font-size:12px;color:#6d6d6d;white-space:nowrap;line-height:1;">압축(ZIP) 파일</div>
<div class="a" style="left:236px;top:999px;width:722px;height:16px;background:#f0f0f0"></div>
<div class="a" style="left:253px;top:1000px;width:624px;height:14px;background:#cdcdcd"></div>
<svg class="a" style="left:239px;top:1002px" width="10" height="10" viewBox="0 0 10 10"><path d="M6.5 1.5 L3 5 L6.5 8.5" fill="none" stroke="#606060" stroke-width="1.8"/></svg>
<svg class="a" style="left:945px;top:1002px" width="10" height="10" viewBox="0 0 10 10"><path d="M3.5 1.5 L7 5 L3.5 8.5" fill="none" stroke="#606060" stroke-width="1.8"/></svg>
<div style="position:absolute;left:15px;top:1021px;font-size:12px;color:#1e3250;white-space:nowrap;line-height:1;">9개 항목</div>
<div class="a" style="left:72px;top:1019px;width:1px;height:15px;background:#eaeaea"></div>
<div style="position:absolute;left:84px;top:1021px;font-size:12px;color:#1e3250;white-space:nowrap;line-height:1;">1개 항목 선택함</div>
<div class="a" style="left:181px;top:1019px;width:1px;height:15px;background:#eaeaea"></div>
<div class="a" style="left:911px;top:1016px;width:22px;height:23px;background:#cce4f7;border:1.5px solid #1c97ea;box-sizing:border-box"></div>
<svg class="a" style="left:914px;top:1020px" width="18" height="16" viewBox="0 0 18 16"><rect x="1.5" y="1" width="4" height="13.5" fill="#fff" stroke="#888" stroke-width="1"/><path d="M1.5 5.5 H5.5 M1.5 9.5 H5.5" stroke="#888"/><circle cx="3.5" cy="3.3" r="0.7" fill="#3a6a4a"/><circle cx="3.5" cy="7.5" r="0.7" fill="#4a8af0"/><circle cx="3.5" cy="11.7" r="0.7" fill="#e02020"/><path d="M7 3.5 H10.5 M12.5 3.5 H16 M7 7.5 H10.5 M12.5 7.5 H16 M7 11.5 H10.5 M12.5 11.5 H16" stroke="#666" stroke-width="1.2"/></svg>
<svg class="a" style="left:936px;top:1020px" width="16" height="14" viewBox="0 0 16 14"><rect x="1" y="1" width="13.5" height="10.5" fill="#fff" stroke="#888" stroke-width="1.2"/><defs><linearGradient id="lg" x1="0" y1="0" x2="0" y2="1"><stop offset="0" stop-color="#4a90e0"/><stop offset="0.5" stop-color="#b0d0e8"/><stop offset="1" stop-color="#2a6a4a"/></linearGradient></defs><rect x="2.8" y="2.8" width="10" height="7" fill="url(#lg)"/></svg>
<div class="a" style="left:916px;top:81px;width:991px;height:805px;background:#fff;border:1px solid #a0a0a0;box-sizing:border-box;box-shadow:0 3px 10px rgba(0,0,0,.3)"></div>
<svg class="a" style="left:925px;top:88px" width="16" height="16" viewBox="0 0 16 16"><rect x="0.5" y="0.5" width="15" height="15" rx="3.5" fill="#f4f2fa"/><rect x="4" y="4" width="8" height="8" rx="1.5" fill="#111"/><circle cx="8" cy="8" r="2.2" fill="#fff"/><circle cx="8" cy="8" r="1" fill="#111"/><rect x="5.5" y="2" width="1.5" height="2" fill="#f5c400"/><rect x="9" y="2" width="1.5" height="2" fill="#f5c400"/><rect x="2" y="5.5" width="2" height="1.5" fill="#f04040"/><rect x="2" y="9" width="2" height="1.5" fill="#f04040"/><rect x="12" y="5.5" width="2" height="1.5" fill="#1aa0f0"/><rect x="12" y="9" width="2" height="1.5" fill="#1aa0f0"/><rect x="5.5" y="12" width="1.5" height="2" fill="#b060f0"/><rect x="9" y="12" width="1.5" height="2" fill="#b060f0"/></svg>
<div style="position:absolute;left:946px;top:90px;font-size:12.5px;color:#8c8c8c;white-space:nowrap;line-height:1;">Logic 2 [Logic Pro 8 - Connected] [Session 2]</div>
<svg class="a" style="left:1780px;top:88px" width="120" height="16" viewBox="0 0 120 16"><path d="M8 8.5 H18" stroke="#8a8a8a" stroke-width="1"/><rect x="53.5" y="3.5" width="9" height="9" fill="none" stroke="#8a8a8a"/><path d="M99 3 L109 13 M109 3 L99 13" stroke="#8a8a8a" stroke-width="1"/></svg>
<div style="position:absolute;left:922px;top:116px;font-size:12px;color:#111;white-space:nowrap;line-height:1;">File</div>
<div style="position:absolute;left:954px;top:116px;font-size:12px;color:#111;white-space:nowrap;line-height:1;">Edit</div>
<div style="position:absolute;left:987px;top:116px;font-size:12px;color:#111;white-space:nowrap;line-height:1;">View</div>
<div style="position:absolute;left:1025px;top:116px;font-size:12px;color:#111;white-space:nowrap;line-height:1;">Capture</div>
<div style="position:absolute;left:1080px;top:116px;font-size:12px;color:#111;white-space:nowrap;line-height:1;">Measure</div>
<div style="position:absolute;left:1139px;top:116px;font-size:12px;color:#111;white-space:nowrap;line-height:1;">Help</div>
<div class="a" style="left:917px;top:132px;width:990px;height:754px;background:#1c1c1d"></div>
<div class="a" style="left:1860px;top:132px;width:47px;height:714px;background:#3b3a3f"></div>
<div class="a" style="left:1860px;top:132px;width:1px;height:714px;background:#47464b"></div>
<div class="a" style="left:917px;top:163px;width:943px;height:1px;background:#4a4a4e"></div>
<div class="a" style="left:917px;top:193px;width:943px;height:1px;background:#4a4a4e"></div>
<div class="a" style="left:1060px;top:132px;width:1px;height:714px;background:#4a4a4e"></div>
<div class="a" style="left:1313px;top:132px;width:1px;height:31px;background:#4a4a4e"></div>
<div class="a" style="left:1363px;top:132px;width:3px;height:31px;background:#4a4a4e"></div>
<div class="a" style="left:1413px;top:132px;width:1px;height:31px;background:#4a4a4e"></div>
<div class="a" style="left:1461px;top:132px;width:1px;height:31px;background:#4a4a4e"></div>
<div class="a" style="left:1510px;top:132px;width:1px;height:31px;background:#4a4a4e"></div>
<div class="a" style="left:1331px;top:141px;width:14px;height:14px;background:#2aa4dc"></div>
<div class="a" style="left:1240px;top:133px;width:73px;height:30px;background:linear-gradient(90deg,rgba(0,0,0,0) 0%,rgba(0,0,0,.28) 100%)"></div>
<div class="a" style="left:1365px;top:133px;width:30px;height:30px;background:linear-gradient(90deg,rgba(0,0,0,.28) 0%,rgba(0,0,0,0) 100%)"></div>
<div class="a" style="left:1270px;top:164px;width:150px;height:30px;background:radial-gradient(ellipse 50% 100% at 50% 0%,rgba(0,0,0,.3),rgba(0,0,0,0))"></div>
<svg class="a" style="left:1372px;top:138px" width="36" height="20" viewBox="0 0 36 20"><path d="M6.5 3 H13.5 L17.5 10 L13.5 17 H6.5 L2.5 10 Z" fill="none" stroke="#5a5a5e" stroke-width="1.5"/><text x="10" y="14" font-size="9.5" font-weight="bold" fill="#5a5a5e" text-anchor="middle" font-family="Liberation Sans">1F</text><path d="M24 8 L27.5 11.5 L31 8" fill="none" stroke="#5a5a5e" stroke-width="1"/></svg>
<svg class="a" style="left:1427px;top:138px" width="22" height="20" viewBox="0 0 22 20"><text x="11" y="10" font-size="11" fill="#5a5a5e" text-anchor="middle" font-family="Liberation Sans">3</text><path d="M2.5 11 V18.5 M2.5 15 H18.5 M18.5 11 V18.5" fill="none" stroke="#5a5a5e" stroke-width="1.5"/></svg>
<svg class="a" style="left:1470px;top:138px" width="36" height="20" viewBox="0 0 36 20"><path d="M2.5 18.5 V3 H10.5 V8.5 H15.5 V18.5 M10.5 8.5 V11.5 H6 M6 12.5 H15.5" fill="none" stroke="#5a5a5e" stroke-width="1.5"/><path d="M23 8 L26.5 11.5 L30 8" fill="none" stroke="#5a5a5e" stroke-width="1"/></svg>
<div style="position:absolute;left:1066px;top:166px;font-size:11px;color:#f0f0f0;white-space:nowrap;line-height:1;font-weight:bold">100 s</div>
<div style="position:absolute;left:1393px;top:178px;font-size:11px;color:#f0f0f0;white-space:nowrap;line-height:1;font-weight:bold">+60 s</div>
<div style="position:absolute;left:1755px;top:178px;font-size:11px;color:#f0f0f0;white-space:nowrap;line-height:1;font-weight:bold">+70 s</div>
<div class="a" style="left:1396px;top:190px;width:1px;height:223px;background:repeating-linear-gradient(to bottom,#6a6a6e 0 4px,transparent 4px 7px)"></div>
<div class="a" style="left:1758px;top:190px;width:1px;height:223px;background:repeating-linear-gradient(to bottom,#6a6a6e 0 4px,transparent 4px 7px)"></div>
<div class="a" style="left:917px;top:194px;width:5px;height:119px;background:#c99276"></div>
<div class="a" style="left:917px;top:314px;width:5px;height:98px;background:#d8d8d8"></div>
<div class="a" style="left:917px;top:312px;width:943px;height:2px;background:#505054"></div>
<div class="a" style="left:917px;top:412px;width:943px;height:2px;background:#505054"></div>
<div style="position:absolute;left:936px;top:215px;font-size:10px;color:#c99276;white-space:nowrap;line-height:1;">D1</div>
<div style="position:absolute;left:972px;top:212px;font-size:12.5px;color:#e8e8ec;white-space:nowrap;line-height:1;">Channel 1</div>
<div class="a" style="left:972px;top:241px;width:6px;height:6px;border-radius:1.5px;background:#d7bb6e"></div>
<div style="position:absolute;left:985px;top:239px;font-size:9px;color:#f0f0f0;white-space:nowrap;line-height:1;font-weight:bold">I2C - SDA</div>
<div style="position:absolute;left:936px;top:335px;font-size:10px;color:#c8c8d0;white-space:nowrap;line-height:1;">D0</div>
<div style="position:absolute;left:972px;top:332px;font-size:12.5px;color:#e8e8ec;white-space:nowrap;line-height:1;">Channel 0</div>
<div class="a" style="left:972px;top:361px;width:6px;height:6px;border-radius:1.5px;background:#d7bb6e"></div>
<div style="position:absolute;left:985px;top:359px;font-size:9px;color:#f0f0f0;white-space:nowrap;line-height:1;font-weight:bold">I2C - SCL</div>
<div style="position:absolute;left:1066px;top:218px;font-size:9px;color:#f0f0f0;white-space:nowrap;line-height:1;font-weight:bold">H</div>
<div class="a" style="left:1061px;top:303px;width:758px;height:1px;background:#d09a7a"></div>
<div class="a" style="left:1061px;top:403px;width:758px;height:1px;background:#f4f4f4"></div>
<svg class="a" style="left:1874px;top:295px" width="20" height="20" viewBox="0 0 20 20"><path d="M10 3 L18 7.5 V11 L10 15.5 L2 11 V7.5 Z" fill="none" stroke="#a3a3a6" stroke-width="1.5"/><path d="M2 7.5 L10 12 L18 7.5" fill="none" stroke="#a3a3a6" stroke-width="1.5"/></svg>
<svg class="a" style="left:1874px;top:367px" width="20" height="20" viewBox="0 0 20 20"><path d="M6 2.5 H14 L18 10 L14 17.5 H6 L2 10 Z" fill="none" stroke="#a3a3a6" stroke-width="1.5"/><text x="10" y="14" font-size="9.5" fill="#a3a3a6" text-anchor="middle" font-family="Liberation Sans">1F</text></svg>
<svg class="a" style="left:1874px;top:440px" width="20" height="20" viewBox="0 0 20 20"><text x="10.5" y="9.5" font-size="10.5" fill="#a3a3a6" text-anchor="middle" font-family="Liberation Sans">3</text><path d="M1 10 V17 M1 13.5 H19 M19 10 V17" fill="none" stroke="#a3a3a6" stroke-width="1.5"/></svg>
<svg class="a" style="left:1874px;top:510px" width="20" height="20" viewBox="0 0 20 20"><path d="M4 2.5 H16 V8 L10 13 L4 8 Z M10 13 V19" fill="none" stroke="#a3a3a6" stroke-width="1.5"/></svg>
<svg class="a" style="left:1870px;top:575px" width="30" height="30" viewBox="0 0 30 30" fill="none" stroke="#a3a3a6" stroke-width="2"><rect x="5" y="9" width="6" height="6"/><rect x="15" y="13" width="6" height="6"/><rect x="9" y="19" width="6" height="6"/><rect x="15" y="19" width="6" height="6"/></svg>
<svg class="a" style="left:1874px;top:655px" width="20" height="20" viewBox="0 0 20 20"><path d="M2 4.5 H15 M2 8.5 H13 M2 12.5 H8 M2 16.5 H6" stroke="#a3a3a6" stroke-width="1.5"/><path d="M9 17 L10 14 L16 8 L18 10 L12 16 Z" fill="#a3a3a6"/></svg>
<div class="a" style="left:1757px;top:837px;width:103px;height:9px;background:#48484c"></div>
<div class="a" style="left:917px;top:846px;width:990px;height:40px;background:#38373c;border-top:1px solid #4a4a4e;box-sizing:border-box"></div>
<div class="a" style="left:1040px;top:847px;width:200px;height:39px;background:#1e1e20"></div>
<div class="a" style="left:917px;top:847px;width:123px;height:39px;background:#3a393e"></div>
<svg class="a" style="left:932px;top:857px" width="20" height="18" viewBox="0 0 20 18"><path d="M10 2.5 L17.5 6.5 V10 L10 14.5 L2.5 10 V6.5 Z" fill="none" stroke="#8a8a8e" stroke-width="1.4"/><path d="M2.5 6.5 L10 11 L17.5 6.5" fill="none" stroke="#8a8a8e" stroke-width="1.4"/></svg>
<div style="position:absolute;left:953px;top:858px;font-size:14px;color:#8a8a8e;white-space:nowrap;line-height:1;">1 Device</div>
<svg class="a" style="left:1013px;top:861px" width="10" height="8" viewBox="0 0 10 8"><path d="M1.5 2 L5 5.5 L8.5 2" fill="none" stroke="#8a8a8e" stroke-width="1.1"/></svg>
<div style="position:absolute;left:1056px;top:858px;font-size:14px;color:#8a8a8e;white-space:nowrap;line-height:1;">Se</div>
<div class="a" style="left:1810px;top:847px;width:1px;height:39px;background:#505054"></div>
<div class="a" style="left:935px;top:736px;width:300px;height:95px;background:#2a2a2d;border:1px solid #48474c;border-radius:4px;box-sizing:border-box"></div>
<svg class="a" style="left:951px;top:754px" width="18" height="18" viewBox="0 0 18 18"><circle cx="9" cy="9" r="8" fill="#e8336a"/><path d="M6 6 L12 12 M12 6 L6 12" stroke="#fff" stroke-width="1.6"/></svg>
<div style="position:absolute;left:976px;top:756px;font-size:12px;color:#f0f0f0;white-space:nowrap;line-height:1;font-weight:bold">An error occurred</div>
<div style="position:absolute;left:976px;top:774px;font-size:12px;color:#f0f0f0;white-space:nowrap;line-height:1;font-weight:bold;font-style:italic">Device disconnected</div>
<div style="position:absolute;left:976px;top:800px;font-size:12.5px;color:#a890ec;white-space:nowrap;line-height:1;">Learn more</div>
<div class="a" style="left:1600px;top:770px;width:252px;height:57px;background:#2a2a2d;border:1px solid #48474c;border-radius:4px;box-sizing:border-box"></div>
<div style="position:absolute;left:1666px;top:794px;font-size:12.5px;color:#b8b8bc;white-space:nowrap;line-height:1;">Memory</div>
<div class="t" style="left:1700px;width:136px;text-align:right;top:794px;font-size:12.5px;color:#b8b8bc">64.8 MB</div>
<div class="a" style="left:1620px;top:813px;width:216px;height:4px;background:#1a1a1c"></div>
<div style="position:absolute;left:1837px;top:774px;font-size:13px;color:#d0d0d0;white-space:nowrap;line-height:1;">×</div>
<div class="a" style="left:1067px;top:266px;width:618px;height:629px;background:#f0f0f0;box-shadow:0 4px 14px rgba(0,0,0,.45);border:1px solid #8a8a8a;box-sizing:border-box"></div>
<div class="a" style="left:1067px;top:266px;width:618px;height:30px;background:#fff"></div>
<svg class="a" style="left:1075px;top:272px" width="16" height="16" viewBox="0 0 16 16"><rect x="0.5" y="0.5" width="15" height="15" rx="2" fill="#4d4d4d" stroke="#3fb0d8"/><path d="M2.5 12.5 L7 3.5 M2.5 12.5 H6.5" stroke="#f5a830" stroke-width="1.2" fill="none"/><path d="M7 13 L8.5 4 L9.5 4.5 L8.5 13 Z" fill="#fff"/><path d="M11 2 V11" stroke="#e83050" stroke-width="1.6"/><path d="M11 2 V3 M11 5 V6 M11 8 V9" stroke="#40a8c8" stroke-width="1.6"/><path d="M11 10 L14.5 13.5" stroke="#fff" stroke-width="1"/><path d="M8.5 15 Q11 10 13.5 15 Z" fill="#3aa8d0"/><circle cx="11" cy="13.5" r="1" fill="#f5a830"/></svg>
<div style="position:absolute;left:1096px;top:274px;font-size:12px;color:#000;white-space:nowrap;line-height:1;">T32Start V2.5.27 *</div>
<svg class="a" style="left:1561px;top:271px" width="115" height="16" viewBox="0 0 115 16"><path d="M5 8.5 H15" stroke="#111" stroke-width="1"/><rect x="50.5" y="3.5" width="10" height="10" fill="none" stroke="#111" stroke-width="1.2"/><path d="M96 3 L106 13 M106 3 L96 13" stroke="#111" stroke-width="1.1"/></svg>
<div class="a" style="left:1068px;top:296px;width:523px;height:532px;background:#fff;border:1px solid #828790;box-sizing:border-box"></div>
<div class="a" style="left:1069px;top:297px;width:521px;height:512px;overflow:hidden">
<svg class="a" style="left:6px;top:5px" width="10" height="7" viewBox="0 0 10 7"><path d="M1 1.5 L5 5.5 L9 1.5" fill="none" stroke="#333" stroke-width="1.6"/></svg>
<div class="a" style="left:17px;top:9px;width:6px;height:1px;background:repeating-linear-gradient(to right,#888 0 1px,transparent 1px 2px)"></div>
<svg class="a" style="left:23px;top:3px" width="12" height="12" viewBox="0 0 12 12" shape-rendering="crispEdges"><rect x="0" y="2" width="12" height="10" fill="#111"/><rect x="2" y="0" width="5" height="2" fill="#111"/><rect x="3" y="1" width="3" height="1" fill="#ffffa0"/><rect x="1" y="3" width="10" height="8" fill="#ffff50"/><path d="M1 3h1v1h-1zM3 3h1v1h-1zM5 3h1v1h-1zM7 3h1v1h-1zM9 3h1v1h-1zM2 4h1v1h-1zM4 4h1v1h-1zM6 4h1v1h-1zM8 4h1v1h-1zM10 4h1v1h-1zM1 5h1v1h-1zM3 5h1v1h-1zM5 5h1v1h-1zM7 5h1v1h-1zM9 5h1v1h-1zM2 6h1v1h-1zM4 6h1v1h-1zM6 6h1v1h-1zM8 6h1v1h-1zM10 6h1v1h-1zM1 7h1v1h-1zM3 7h1v1h-1zM5 7h1v1h-1zM7 7h1v1h-1zM9 7h1v1h-1zM2 8h1v1h-1zM4 8h1v1h-1zM6 8h1v1h-1zM8 8h1v1h-1zM10 8h1v1h-1zM1 9h1v1h-1zM3 9h1v1h-1zM5 9h1v1h-1zM7 9h1v1h-1zM9 9h1v1h-1zM2 10h1v1h-1zM4 10h1v1h-1zM6 10h1v1h-1zM8 10h1v1h-1zM10 10h1v1h-1z" fill="#ffffd8"/></svg>
<div class="t" style="left:43px;top:4px;font-size:11px;color:#000">Configuration Tree</div>
<svg class="a" style="left:27px;top:20px" width="7" height="10" viewBox="0 0 7 10"><path d="M1.5 1 L5.5 5 L1.5 9" fill="none" stroke="#a8a8a8" stroke-width="1.6"/></svg>
<div class="a" style="left:36px;top:25px;width:6px;height:1px;background:repeating-linear-gradient(to right,#888 0 1px,transparent 1px 2px)"></div>
<svg class="a" style="left:42px;top:19px" width="12" height="12" viewBox="0 0 12 12" shape-rendering="crispEdges"><rect x="0" y="2" width="12" height="10" fill="#111"/><rect x="2" y="0" width="5" height="2" fill="#111"/><rect x="3" y="1" width="3" height="1" fill="#ffffa0"/><rect x="1" y="3" width="10" height="8" fill="#ffff50"/><path d="M1 3h1v1h-1zM3 3h1v1h-1zM5 3h1v1h-1zM7 3h1v1h-1zM9 3h1v1h-1zM2 4h1v1h-1zM4 4h1v1h-1zM6 4h1v1h-1zM8 4h1v1h-1zM10 4h1v1h-1zM1 5h1v1h-1zM3 5h1v1h-1zM5 5h1v1h-1zM7 5h1v1h-1zM9 5h1v1h-1zM2 6h1v1h-1zM4 6h1v1h-1zM6 6h1v1h-1zM8 6h1v1h-1zM10 6h1v1h-1zM1 7h1v1h-1zM3 7h1v1h-1zM5 7h1v1h-1zM7 7h1v1h-1zM9 7h1v1h-1zM2 8h1v1h-1zM4 8h1v1h-1zM6 8h1v1h-1zM8 8h1v1h-1zM10 8h1v1h-1zM1 9h1v1h-1zM3 9h1v1h-1zM5 9h1v1h-1zM7 9h1v1h-1zM9 9h1v1h-1zM2 10h1v1h-1zM4 10h1v1h-1zM6 10h1v1h-1zM8 10h1v1h-1zM10 10h1v1h-1z" fill="#ffffd8"/></svg>
<div class="t" style="left:62px;top:20px;font-size:11px;color:#000">Settings</div>
<svg class="a" style="left:25px;top:37px" width="10" height="7" viewBox="0 0 10 7"><path d="M1 1.5 L5 5.5 L9 1.5" fill="none" stroke="#333" stroke-width="1.6"/></svg>
<div class="a" style="left:36px;top:41px;width:6px;height:1px;background:repeating-linear-gradient(to right,#888 0 1px,transparent 1px 2px)"></div>
<svg class="a" style="left:42px;top:35px" width="12" height="12" viewBox="0 0 12 12" shape-rendering="crispEdges"><rect x="0" y="2" width="12" height="10" fill="#111"/><rect x="2" y="0" width="5" height="2" fill="#111"/><rect x="3" y="1" width="3" height="1" fill="#ffffa0"/><rect x="1" y="3" width="10" height="8" fill="#ffff50"/><path d="M1 3h1v1h-1zM3 3h1v1h-1zM5 3h1v1h-1zM7 3h1v1h-1zM9 3h1v1h-1zM2 4h1v1h-1zM4 4h1v1h-1zM6 4h1v1h-1zM8 4h1v1h-1zM10 4h1v1h-1zM1 5h1v1h-1zM3 5h1v1h-1zM5 5h1v1h-1zM7 5h1v1h-1zM9 5h1v1h-1zM2 6h1v1h-1zM4 6h1v1h-1zM6 6h1v1h-1zM8 6h1v1h-1zM10 6h1v1h-1zM1 7h1v1h-1zM3 7h1v1h-1zM5 7h1v1h-1zM7 7h1v1h-1zM9 7h1v1h-1zM2 8h1v1h-1zM4 8h1v1h-1zM6 8h1v1h-1zM8 8h1v1h-1zM10 8h1v1h-1zM1 9h1v1h-1zM3 9h1v1h-1zM5 9h1v1h-1zM7 9h1v1h-1zM9 9h1v1h-1zM2 10h1v1h-1zM4 10h1v1h-1zM6 10h1v1h-1zM8 10h1v1h-1zM10 10h1v1h-1z" fill="#ffffd8"/><path d="M4 4 L8 7 L4 10 Z" fill="#0a8a0a" shape-rendering="auto"/></svg>
<div class="t" style="left:62px;top:36px;font-size:11px;color:#000">Example Configuration</div>
<svg class="a" style="left:44px;top:53px" width="10" height="7" viewBox="0 0 10 7"><path d="M1 1.5 L5 5.5 L9 1.5" fill="none" stroke="#333" stroke-width="1.6"/></svg>
<div class="a" style="left:55px;top:57px;width:6px;height:1px;background:repeating-linear-gradient(to right,#888 0 1px,transparent 1px 2px)"></div>
<svg class="a" style="left:58px;top:50px" width="17" height="15" viewBox="0 0 17 15" shape-rendering="crispEdges"><rect x="0" y="0" width="1" height="5" fill="#111"/><rect x="1" y="0" width="14" height="5" fill="#bdbdbd"/><rect x="15" y="0" width="1" height="5" fill="#111"/><rect x="15" y="1" width="2" height="3" fill="#111"/><rect x="1" y="5" width="15" height="1" fill="#111"/><rect x="4" y="6" width="9" height="3" fill="#111"/><rect x="1" y="9" width="15" height="1" fill="#111"/><rect x="0" y="9" width="1" height="6" fill="#111"/><rect x="1" y="10" width="14" height="5" fill="#bdbdbd"/><rect x="15" y="10" width="1" height="5" fill="#111"/><rect x="15" y="11" width="2" height="3" fill="#111"/></svg>
<div class="t" style="left:81px;top:52px;font-size:11px;color:#000">1: Podbus Device Chain</div>
<svg class="a" style="left:63px;top:69px" width="10" height="7" viewBox="0 0 10 7"><path d="M1 1.5 L5 5.5 L9 1.5" fill="none" stroke="#333" stroke-width="1.6"/></svg>
<div class="a" style="left:74px;top:73px;width:6px;height:1px;background:repeating-linear-gradient(to right,#888 0 1px,transparent 1px 2px)"></div>
<svg class="a" style="left:78px;top:65px" width="17" height="16" viewBox="0 0 17 16"><rect x="5" y="0" width="6" height="2" fill="#111"/><rect x="5" y="14" width="6" height="2" fill="#111"/><rect x="1" y="2" width="14" height="12" rx="1" fill="#c8c8c8" stroke="#111"/><text x="8" y="11" font-size="6.5" font-family="Liberation Mono" fill="#111" text-anchor="middle">USB</text></svg>
<div class="t" style="left:100px;top:68px;font-size:11px;color:#000">1: Power Debug USB</div>
<div class="a" style="left:87px;top:89px;width:12px;height:1px;background:repeating-linear-gradient(to right,#888 0 1px,transparent 1px 2px)"></div>
<svg class="a" style="left:99px;top:84px" width="14" height="10" viewBox="0 0 14 10"><rect x="0.5" y="0.5" width="13" height="9" fill="#fff" stroke="#111"/><path d="M4 3 H10 L7 7 Z" fill="#111"/><path d="M7 1 V4" stroke="#111" stroke-width="2"/></svg>
<div class="t" style="left:119px;top:84px;font-size:11px;color:#000">ConnectionType: USB</div>
<svg class="a" style="left:84px;top:100px" width="7" height="10" viewBox="0 0 7 10"><path d="M1.5 1 L5.5 5 L1.5 9" fill="none" stroke="#a8a8a8" stroke-width="1.6"/></svg>
<div class="a" style="left:93px;top:105px;width:6px;height:1px;background:repeating-linear-gradient(to right,#888 0 1px,transparent 1px 2px)"></div>
<svg class="a" style="left:99px;top:99px" width="12" height="12" viewBox="0 0 12 12" shape-rendering="crispEdges"><rect x="0" y="2" width="12" height="10" fill="#111"/><rect x="2" y="0" width="5" height="2" fill="#111"/><rect x="3" y="1" width="3" height="1" fill="#ffffa0"/><rect x="1" y="3" width="10" height="8" fill="#ffff50"/><path d="M1 3h1v1h-1zM3 3h1v1h-1zM5 3h1v1h-1zM7 3h1v1h-1zM9 3h1v1h-1zM2 4h1v1h-1zM4 4h1v1h-1zM6 4h1v1h-1zM8 4h1v1h-1zM10 4h1v1h-1zM1 5h1v1h-1zM3 5h1v1h-1zM5 5h1v1h-1zM7 5h1v1h-1zM9 5h1v1h-1zM2 6h1v1h-1zM4 6h1v1h-1zM6 6h1v1h-1zM8 6h1v1h-1zM10 6h1v1h-1zM1 7h1v1h-1zM3 7h1v1h-1zM5 7h1v1h-1zM7 7h1v1h-1zM9 7h1v1h-1zM2 8h1v1h-1zM4 8h1v1h-1zM6 8h1v1h-1zM8 8h1v1h-1zM10 8h1v1h-1zM1 9h1v1h-1zM3 9h1v1h-1zM5 9h1v1h-1zM7 9h1v1h-1zM9 9h1v1h-1zM2 10h1v1h-1zM4 10h1v1h-1zM6 10h1v1h-1zM8 10h1v1h-1zM10 10h1v1h-1z" fill="#ffffd8"/></svg>
<div class="t" style="left:119px;top:100px;font-size:11px;color:#000">USB Settings</div>
<svg class="a" style="left:82px;top:117px" width="10" height="7" viewBox="0 0 10 7"><path d="M1 1.5 L5 5.5 L9 1.5" fill="none" stroke="#333" stroke-width="1.6"/></svg>
<div class="a" style="left:93px;top:121px;width:6px;height:1px;background:repeating-linear-gradient(to right,#888 0 1px,transparent 1px 2px)"></div>
<svg class="a" style="left:97px;top:113px" width="16" height="16" viewBox="0 0 16 16"><rect x="0.5" y="0.5" width="15" height="15" rx="2" fill="#4a4a4a" stroke="#39a0c8"/><path d="M2.5 13 L6 4 M2.5 13 H5.5" stroke="#f0a030" stroke-width="1.1" fill="none"/><path d="M6.5 13 L9 3 L13.5 13 Z" fill="#fff"/></svg>
<div class="t" style="left:119px;top:116px;font-size:11px;color:#000">1: PowerView Instance</div>
<div class="a" style="left:106px;top:137px;width:12px;height:1px;background:repeating-linear-gradient(to right,#888 0 1px,transparent 1px 2px)"></div>
<svg class="a" style="left:118px;top:132px" width="14" height="10" viewBox="0 0 14 10"><rect x="0.5" y="0.5" width="13" height="9" fill="#fff" stroke="#111"/><path d="M4 3 H10 L7 7 Z" fill="#111"/><path d="M7 1 V4" stroke="#111" stroke-width="2"/></svg>
<div class="t" style="left:138px;top:132px;font-size:11px;color:#000">Target: ARM/XScale/Janus</div>
<svg class="a" style="left:101px;top:149px" width="10" height="7" viewBox="0 0 10 7"><path d="M1 1.5 L5 5.5 L9 1.5" fill="none" stroke="#333" stroke-width="1.6"/></svg>
<div class="a" style="left:112px;top:153px;width:6px;height:1px;background:repeating-linear-gradient(to right,#888 0 1px,transparent 1px 2px)"></div>
<svg class="a" style="left:118px;top:147px" width="12" height="12" viewBox="0 0 12 12" shape-rendering="crispEdges"><rect x="0" y="2" width="12" height="10" fill="#111"/><rect x="2" y="0" width="5" height="2" fill="#111"/><rect x="3" y="1" width="3" height="1" fill="#ffffa0"/><rect x="1" y="3" width="10" height="8" fill="#ffff50"/><path d="M1 3h1v1h-1zM3 3h1v1h-1zM5 3h1v1h-1zM7 3h1v1h-1zM9 3h1v1h-1zM2 4h1v1h-1zM4 4h1v1h-1zM6 4h1v1h-1zM8 4h1v1h-1zM10 4h1v1h-1zM1 5h1v1h-1zM3 5h1v1h-1zM5 5h1v1h-1zM7 5h1v1h-1zM9 5h1v1h-1zM2 6h1v1h-1zM4 6h1v1h-1zM6 6h1v1h-1zM8 6h1v1h-1zM10 6h1v1h-1zM1 7h1v1h-1zM3 7h1v1h-1zM5 7h1v1h-1zM7 7h1v1h-1zM9 7h1v1h-1zM2 8h1v1h-1zM4 8h1v1h-1zM6 8h1v1h-1zM8 8h1v1h-1zM10 8h1v1h-1zM1 9h1v1h-1zM3 9h1v1h-1zM5 9h1v1h-1zM7 9h1v1h-1zM9 9h1v1h-1zM2 10h1v1h-1zM4 10h1v1h-1zM6 10h1v1h-1zM8 10h1v1h-1zM10 10h1v1h-1z" fill="#ffffd8"/></svg>
<div class="t" style="left:138px;top:148px;font-size:11px;color:#000">Advanced Settings</div>
<svg class="a" style="left:122px;top:164px" width="7" height="10" viewBox="0 0 7 10"><path d="M1.5 1 L5.5 5 L1.5 9" fill="none" stroke="#a8a8a8" stroke-width="1.6"/></svg>
<div class="a" style="left:131px;top:169px;width:6px;height:1px;background:repeating-linear-gradient(to right,#888 0 1px,transparent 1px 2px)"></div>
<svg class="a" style="left:137px;top:163px" width="12" height="12" viewBox="0 0 12 12" shape-rendering="crispEdges"><rect x="0" y="2" width="12" height="10" fill="#111"/><rect x="2" y="0" width="5" height="2" fill="#111"/><rect x="3" y="1" width="3" height="1" fill="#ffffa0"/><rect x="1" y="3" width="10" height="8" fill="#ffff50"/><path d="M1 3h1v1h-1zM3 3h1v1h-1zM5 3h1v1h-1zM7 3h1v1h-1zM9 3h1v1h-1zM2 4h1v1h-1zM4 4h1v1h-1zM6 4h1v1h-1zM8 4h1v1h-1zM10 4h1v1h-1zM1 5h1v1h-1zM3 5h1v1h-1zM5 5h1v1h-1zM7 5h1v1h-1zM9 5h1v1h-1zM2 6h1v1h-1zM4 6h1v1h-1zM6 6h1v1h-1zM8 6h1v1h-1zM10 6h1v1h-1zM1 7h1v1h-1zM3 7h1v1h-1zM5 7h1v1h-1zM7 7h1v1h-1zM9 7h1v1h-1zM2 8h1v1h-1zM4 8h1v1h-1zM6 8h1v1h-1zM8 8h1v1h-1zM10 8h1v1h-1zM1 9h1v1h-1zM3 9h1v1h-1zM5 9h1v1h-1zM7 9h1v1h-1zM9 9h1v1h-1zM2 10h1v1h-1zM4 10h1v1h-1zM6 10h1v1h-1zM8 10h1v1h-1zM10 10h1v1h-1z" fill="#ffffd8"/></svg>
<div class="t" style="left:157px;top:164px;font-size:11px;color:#000">Paths</div>
<svg class="a" style="left:122px;top:180px" width="7" height="10" viewBox="0 0 7 10"><path d="M1.5 1 L5.5 5 L1.5 9" fill="none" stroke="#a8a8a8" stroke-width="1.6"/></svg>
<div class="a" style="left:131px;top:185px;width:6px;height:1px;background:repeating-linear-gradient(to right,#888 0 1px,transparent 1px 2px)"></div>
<svg class="a" style="left:137px;top:179px" width="12" height="12" viewBox="0 0 12 12" shape-rendering="crispEdges"><rect x="0" y="2" width="12" height="10" fill="#111"/><rect x="2" y="0" width="5" height="2" fill="#111"/><rect x="3" y="1" width="3" height="1" fill="#ffffa0"/><rect x="1" y="3" width="10" height="8" fill="#ffff50"/><path d="M1 3h1v1h-1zM3 3h1v1h-1zM5 3h1v1h-1zM7 3h1v1h-1zM9 3h1v1h-1zM2 4h1v1h-1zM4 4h1v1h-1zM6 4h1v1h-1zM8 4h1v1h-1zM10 4h1v1h-1zM1 5h1v1h-1zM3 5h1v1h-1zM5 5h1v1h-1zM7 5h1v1h-1zM9 5h1v1h-1zM2 6h1v1h-1zM4 6h1v1h-1zM6 6h1v1h-1zM8 6h1v1h-1zM10 6h1v1h-1zM1 7h1v1h-1zM3 7h1v1h-1zM5 7h1v1h-1zM7 7h1v1h-1zM9 7h1v1h-1zM2 8h1v1h-1zM4 8h1v1h-1zM6 8h1v1h-1zM8 8h1v1h-1zM10 8h1v1h-1zM1 9h1v1h-1zM3 9h1v1h-1zM5 9h1v1h-1zM7 9h1v1h-1zM9 9h1v1h-1zM2 10h1v1h-1zM4 10h1v1h-1zM6 10h1v1h-1zM8 10h1v1h-1zM10 10h1v1h-1z" fill="#ffffd8"/></svg>
<div class="t" style="left:157px;top:180px;font-size:11px;color:#000">Interfaces</div>
<svg class="a" style="left:122px;top:196px" width="7" height="10" viewBox="0 0 7 10"><path d="M1.5 1 L5.5 5 L1.5 9" fill="none" stroke="#a8a8a8" stroke-width="1.6"/></svg>
<div class="a" style="left:131px;top:201px;width:6px;height:1px;background:repeating-linear-gradient(to right,#888 0 1px,transparent 1px 2px)"></div>
<svg class="a" style="left:137px;top:195px" width="12" height="12" viewBox="0 0 12 12" shape-rendering="crispEdges"><rect x="0" y="2" width="12" height="10" fill="#111"/><rect x="2" y="0" width="5" height="2" fill="#111"/><rect x="3" y="1" width="3" height="1" fill="#ffffa0"/><rect x="1" y="3" width="10" height="8" fill="#ffff50"/><path d="M1 3h1v1h-1zM3 3h1v1h-1zM5 3h1v1h-1zM7 3h1v1h-1zM9 3h1v1h-1zM2 4h1v1h-1zM4 4h1v1h-1zM6 4h1v1h-1zM8 4h1v1h-1zM10 4h1v1h-1zM1 5h1v1h-1zM3 5h1v1h-1zM5 5h1v1h-1zM7 5h1v1h-1zM9 5h1v1h-1zM2 6h1v1h-1zM4 6h1v1h-1zM6 6h1v1h-1zM8 6h1v1h-1zM10 6h1v1h-1zM1 7h1v1h-1zM3 7h1v1h-1zM5 7h1v1h-1zM7 7h1v1h-1zM9 7h1v1h-1zM2 8h1v1h-1zM4 8h1v1h-1zM6 8h1v1h-1zM8 8h1v1h-1zM10 8h1v1h-1zM1 9h1v1h-1zM3 9h1v1h-1zM5 9h1v1h-1zM7 9h1v1h-1zM9 9h1v1h-1zM2 10h1v1h-1zM4 10h1v1h-1zM6 10h1v1h-1zM8 10h1v1h-1zM10 10h1v1h-1z" fill="#ffffd8"/></svg>
<div class="t" style="left:157px;top:196px;font-size:11px;color:#000">Display</div>
<svg class="a" style="left:120px;top:213px" width="10" height="7" viewBox="0 0 10 7"><path d="M1 1.5 L5 5.5 L9 1.5" fill="none" stroke="#333" stroke-width="1.6"/></svg>
<div class="a" style="left:131px;top:217px;width:6px;height:1px;background:repeating-linear-gradient(to right,#888 0 1px,transparent 1px 2px)"></div>
<svg class="a" style="left:137px;top:211px" width="12" height="12" viewBox="0 0 12 12" shape-rendering="crispEdges"><rect x="0" y="2" width="12" height="10" fill="#111"/><rect x="2" y="0" width="5" height="2" fill="#111"/><rect x="3" y="1" width="3" height="1" fill="#ffffa0"/><rect x="1" y="3" width="10" height="8" fill="#ffff50"/><path d="M1 3h1v1h-1zM3 3h1v1h-1zM5 3h1v1h-1zM7 3h1v1h-1zM9 3h1v1h-1zM2 4h1v1h-1zM4 4h1v1h-1zM6 4h1v1h-1zM8 4h1v1h-1zM10 4h1v1h-1zM1 5h1v1h-1zM3 5h1v1h-1zM5 5h1v1h-1zM7 5h1v1h-1zM9 5h1v1h-1zM2 6h1v1h-1zM4 6h1v1h-1zM6 6h1v1h-1zM8 6h1v1h-1zM10 6h1v1h-1zM1 7h1v1h-1zM3 7h1v1h-1zM5 7h1v1h-1zM7 7h1v1h-1zM9 7h1v1h-1zM2 8h1v1h-1zM4 8h1v1h-1zM6 8h1v1h-1zM8 8h1v1h-1zM10 8h1v1h-1zM1 9h1v1h-1zM3 9h1v1h-1zM5 9h1v1h-1zM7 9h1v1h-1zM9 9h1v1h-1zM2 10h1v1h-1zM4 10h1v1h-1zM6 10h1v1h-1zM8 10h1v1h-1zM10 10h1v1h-1z" fill="#ffffd8"/></svg>
<div class="t" style="left:157px;top:212px;font-size:11px;color:#000">StartupScript</div>
<div class="a" style="left:144px;top:233px;width:12px;height:1px;background:repeating-linear-gradient(to right,#888 0 1px,transparent 1px 2px)"></div>
<svg class="a" style="left:156px;top:228px" width="14" height="10" viewBox="0 0 14 10"><rect x="0.5" y="0.5" width="13" height="9" fill="#fff" stroke="#111"/><path d="M4 3 H10 L7 7 Z" fill="#111"/><path d="M7 1 V4" stroke="#111" stroke-width="2"/></svg>
<div class="t" style="left:176px;top:228px;font-size:11px;color:#000">Source: File</div>
<div class="a" style="left:153px;top:241px;width:400px;height:16px;background:#cce8ff"></div>
<div class="a" style="left:144px;top:249px;width:12px;height:1px;background:repeating-linear-gradient(to right,#888 0 1px,transparent 1px 2px)"></div>
<svg class="a" style="left:160px;top:243px" width="10" height="12" viewBox="0 0 10 12"><path d="M3.5 0.5 H8.5 V11.5 H0.5 V3.5 Z" fill="#fff" stroke="#111"/></svg>
<div class="t" style="left:176px;top:244px;font-size:11px;color:#000">File: C:\Renesas\adas_prk_3_r770\BSW_RTE\Debugger_Scripts\prk3_M</div>
<div class="a" style="left:144px;top:265px;width:12px;height:1px;background:repeating-linear-gradient(to right,#888 0 1px,transparent 1px 2px)"></div>
<svg class="a" style="left:156px;top:260px" width="14" height="10" viewBox="0 0 14 10"><rect x="0.5" y="0.5" width="13" height="9" fill="#fff" stroke="#111"/><text x="7" y="7.5" font-size="6" font-weight="bold" font-family="Liberation Sans" fill="#111" text-anchor="middle">ABC</text></svg>
<div class="t" style="left:176px;top:260px;font-size:11px;color:#000">Parameters:</div>
<div class="a" style="left:144px;top:281px;width:12px;height:1px;background:repeating-linear-gradient(to right,#888 0 1px,transparent 1px 2px)"></div>
<svg class="a" style="left:156px;top:276px" width="14" height="10" viewBox="0 0 14 10"><rect x="0.5" y="0.5" width="13" height="9" fill="#fff" stroke="#111"/><path d="M4 2 L10 8 M10 2 L4 8" stroke="#111"/></svg>
<div class="t" style="left:176px;top:276px;font-size:11px;color:#000">SafeStart: no</div>
<div class="a" style="left:87px;top:81px;width:1px;height:16px;background:repeating-linear-gradient(to bottom,#888 0 1px,transparent 1px 2px)"></div>
<div class="a" style="left:106px;top:129px;width:1px;height:16px;background:repeating-linear-gradient(to bottom,#888 0 1px,transparent 1px 2px)"></div>
<div class="a" style="left:144px;top:225px;width:1px;height:57px;background:repeating-linear-gradient(to bottom,#888 0 1px,transparent 1px 2px)"></div>
</div>
<div class="a" style="left:1069px;top:810px;width:521px;height:16px;background:#f0f0f0"></div>
<div class="a" style="left:1086px;top:810px;width:436px;height:15px;background:#cdcdcd"></div>
<svg class="a" style="left:1576px;top:812px" width="7" height="10" viewBox="0 0 7 10"><path d="M1.5 1 L5.5 5 L1.5 9" fill="none" stroke="#555" stroke-width="1.6"/></svg>
<svg class="a" style="left:1073px;top:812px" width="7" height="10" viewBox="0 0 7 10"><path d="M5.5 1 L1.5 5 L5.5 9" fill="none" stroke="#555" stroke-width="1.6"/></svg>
<div class="t" style="left:1592px;width:94px;text-align:center;top:311px;font-size:11px;color:#000">Start</div>
<div class="t" style="left:1592px;width:94px;text-align:center;top:338px;font-size:11px;color:#a0a0a0">Add...</div>
<div class="t" style="left:1592px;width:94px;text-align:center;top:365px;font-size:11px;color:#a0a0a0">Delete</div>
<div class="t" style="left:1592px;width:94px;text-align:center;top:392px;font-size:11px;color:#a0a0a0">Up</div>
<div class="t" style="left:1592px;width:94px;text-align:center;top:419px;font-size:11px;color:#a0a0a0">Down</div>
<div class="t" style="left:1592px;width:94px;text-align:center;top:448px;font-size:11px;color:#000">Instances...</div>
<div class="t" style="left:1592px;width:94px;text-align:center;top:478px;font-size:11px;color:#000">Information...</div>
<div class="t" style="left:1592px;width:94px;text-align:center;top:508px;font-size:11px;color:#000">Save and Exit</div>
<div class="t" style="left:1592px;width:94px;text-align:center;top:536px;font-size:11px;color:#000">Save</div>
<div class="t" style="left:1592px;width:94px;text-align:center;top:564px;font-size:11px;color:#000">Help</div>
<div class="a" style="left:1068px;top:830px;width:521px;height:45px;background:#fff;border:1px solid #e3e3e3;box-sizing:border-box"></div>
<div style="position:absolute;left:1079px;top:850px;font-size:11px;color:#000;white-space:nowrap;line-height:1;">File</div>
<div class="a" style="left:1222px;top:842px;width:195px;height:21px;background:#fff;border:1px solid #7a7a7a;box-sizing:border-box;overflow:hidden"><div class="t" style="left:3px;top:4px;font-size:11px;color:#000">C:\Renesas\adas_prk_3_r770\BSW_RTE</div></div>
<div class="a" style="left:1424px;top:842px;width:23px;height:23px;background:#e1e1e1;border:1px solid #adadad;box-sizing:border-box"><div class="t" style="left:0;width:100%;text-align:center;top:6px;font-size:11px;color:#000">...</div></div>
<div class="a" style="left:1452px;top:842px;width:51px;height:23px;background:#e1e1e1;border:1px solid #adadad;box-sizing:border-box"><div class="t" style="left:0;width:100%;text-align:center;top:6px;font-size:11px;color:#000">Link to...</div></div>
<div class="a" style="left:1509px;top:842px;width:32px;height:23px;background:#e1e1e1;border:1px solid #adadad;box-sizing:border-box"><div class="t" style="left:0;width:100%;text-align:center;top:6px;font-size:11px;color:#000">Edit...</div></div>
<div class="a" style="left:1068px;top:876px;width:616px;height:1px;background:#dadada"></div>
<div style="position:absolute;left:1069px;top:880px;font-size:12.2px;color:#000;white-space:nowrap;line-height:1;">ID: //Configuration/Podbus Device Chain/Power Debug USB/PowerView Instance/CoreAd...</div>
<svg class="a" style="left:1671px;top:882px" width="11" height="11" viewBox="0 0 11 11"><g fill="#b0b0b0"><rect x="8" y="2" width="2" height="2"/><rect x="5" y="5" width="2" height="2"/><rect x="8" y="5" width="2" height="2"/><rect x="2" y="8" width="2" height="2"/><rect x="5" y="8" width="2" height="2"/><rect x="8" y="8" width="2" height="2"/></g></svg>
<div class="a" style="left:1693px;top:861px;width:226px;height:178px;background:#fff;border:1px solid #9a9a9a;box-sizing:border-box;box-shadow:0 0 6px rgba(0,0,0,.25)"></div>
<div class="a" style="left:0;top:1040px;width:1920px;height:40px;background:linear-gradient(90deg,#203540 0%,#1f323f 40%,#1c2b3f 70%,#1b2541 100%)"></div>
<svg class="a" style="left:15px;top:1051px" width="18" height="18" viewBox="0 0 18 18"><g fill="#fff"><path d="M0.5 2.8 L7.5 1.8 V8.5 H0.5 Z"/><path d="M8.5 1.6 L17 0.5 V8.5 H8.5 Z"/><path d="M0.5 9.5 H7.5 V16.2 L0.5 15.2 Z"/><path d="M8.5 9.5 H17 V17.5 L8.5 16.4 Z"/></g></svg>
<div class="a" style="left:48px;top:1040px;width:288px;height:40px;background:#f0f0f0;border:1px solid #d0d0d0;box-sizing:border-box"></div>
<svg class="a" style="left:58px;top:1051px" width="20" height="20" viewBox="0 0 20 20"><circle cx="12" cy="7.5" r="5.3" fill="none" stroke="#222" stroke-width="1.3"/><path d="M8.2 11.3 L1.5 18" stroke="#222" stroke-width="1.4"/></svg>
<div style="position:absolute;left:88px;top:1052px;font-size:15px;color:#222;white-space:nowrap;line-height:1;">찾기</div>
<svg class="a" style="left:351px;top:1051px" width="18" height="18" viewBox="0 0 18 18"><path d="M1 1 V3 H11 V1 M1 17 V15 H11 V17" fill="none" stroke="#fff" stroke-width="1.2"/><rect x="1.6" y="5.6" width="9" height="6.8" fill="none" stroke="#fff" stroke-width="1.2"/><path d="M15.5 1 V17" stroke="#fff" stroke-width="1.2"/><rect x="14" y="5" width="3" height="3" fill="#fff"/></svg>
<svg class="a" style="left:398px;top:1047px" width="26" height="26" viewBox="0 0 26 26"><defs><linearGradient id="eg1" x1="0" y1="0" x2="1" y2="0.6"><stop offset="0" stop-color="#36b8f0"/><stop offset="0.5" stop-color="#2fc8c8"/><stop offset="1" stop-color="#6ee06a"/></linearGradient><linearGradient id="eg2" x1="0" y1="0" x2="1" y2="1"><stop offset="0" stop-color="#1b8ee0"/><stop offset="1" stop-color="#0e5cb0"/></linearGradient></defs><path d="M13 1 C20 1 25 6 25 12 C25 16 22 18 18 18 C14 18 13 16 14 14 C15 12 17 11 16 8 C14 4 6 4 2 10 C3 5 7 1 13 1 Z" fill="url(#eg1)"/><path d="M2 10 C6 4 14 5 15 9 C12 8 8 9 7 13 C6 19 12 24 18 22 C20 21.5 21 21 22 20 C19 24 15 25 12 25 C6 25 1 20 1 14 C1 12.5 1.3 11 2 10 Z" fill="url(#eg2)"/><circle cx="11.5" cy="12.5" r="2.8" fill="#1f323d"/><rect x="1" y="17" width="12" height="8.5" fill="#e08a10"/><rect x="1" y="21" width="12" height="4.5" fill="#b86a08"/><path d="M5 17 V15.5 H9 V17" fill="none" stroke="#6a4010" stroke-width="1"/><rect x="6.3" y="20" width="1.4" height="1.4" fill="#ffd040"/></svg>
<svg class="a" style="left:448px;top:1050px" width="24" height="21" viewBox="0 0 24 21"><path d="M1 1 H9 L10.5 3 H23 V19 H1 Z" fill="#e8a818"/><rect x="1" y="4" width="22" height="15" fill="#ffd666"/><path d="M5 20 V10.5 H19 V20 H15.5 V14.5 H8.5 V20 Z" fill="#3a92e0"/></svg>
<svg class="a" style="left:497px;top:1048px" width="23" height="23" viewBox="0 0 23 23"><path d="M7 6 V3 Q7 1 9 1 H14 Q16 1 16 3 V6" fill="none" stroke="#2aa8e8" stroke-width="2"/><rect x="1" y="5.5" width="21" height="17" rx="3" fill="#f4f4f4"/><rect x="7" y="9.5" width="4" height="4" fill="#f25022"/><rect x="12" y="9.5" width="4" height="4" fill="#7fba00"/><rect x="7" y="14.5" width="4" height="4" fill="#00a4ef"/><rect x="12" y="14.5" width="4" height="4" fill="#ffb900"/></svg>
<svg class="a" style="left:545px;top:1048px" width="26" height="26" viewBox="0 0 26 26"><path d="M1 3 L12 1 V22 L1 20 Z" fill="#1565c0"/><path d="M12 3 H16 V19 H12" fill="#1e88e5"/><text x="6" y="15" font-size="9" font-weight="bold" fill="#fff" text-anchor="middle" font-family="Liberation Sans">L</text><path d="M13 9 A5 5 0 0 1 21 11" fill="none" stroke="#fff" stroke-width="1.4"/><circle cx="18.5" cy="18.5" r="6" fill="#e05a44"/><path d="M16 16 L21 21 M21 16 L16 21" stroke="#fff" stroke-width="1.5"/></svg>
<svg class="a" style="left:594px;top:1048px" width="24" height="24" viewBox="0 0 24 24"><path d="M17 1 L23 4 V20 L17 23 L6 13 L2.5 16 L1 15 V9 L2.5 8 L6 11 Z M17 7 L10 12 L17 17 Z" fill="#23a9f2"/><path d="M17 1 L23 4 V20 L17 23 Z" fill="#0e7ed0"/></svg>
<svg class="a" style="left:643px;top:1049px" width="25" height="22" viewBox="0 0 25 22"><rect x="3" y="1" width="19" height="15" fill="#777"/><rect x="4" y="2" width="17" height="13" fill="#f8e048"/><path d="M8 4.5 H17 V7 H13.8 V13 H11.2 V7 H8 Z" fill="#1818e0"/><path d="M1 17 H24 L23 20 H2 Z" fill="#b8b8b8"/></svg>
<svg class="a" style="left:692px;top:1048px" width="24" height="24" viewBox="0 0 24 24"><rect x="0.5" y="0.5" width="23" height="23" rx="5" fill="#fff"/><rect x="6" y="6" width="12" height="12" rx="2.5" fill="#111"/><circle cx="12" cy="12" r="3.2" fill="#fff"/><circle cx="12" cy="12" r="1.5" fill="#111"/><rect x="8" y="3" width="2" height="3" fill="#f5c400"/><rect x="14" y="3" width="2" height="3" fill="#f5c400"/><rect x="3" y="8" width="3" height="2" fill="#f04040"/><rect x="3" y="14" width="3" height="2" fill="#f04040"/><rect x="18" y="8" width="3" height="2" fill="#1aa0f0"/><rect x="18" y="14" width="3" height="2" fill="#1aa0f0"/><rect x="8" y="18" width="2" height="3" fill="#b060f0"/><rect x="14" y="18" width="2" height="3" fill="#b060f0"/></svg>
<svg class="a" style="left:742px;top:1047px" width="24" height="26" viewBox="0 0 24 26"><path d="M2 2 H15 L19 6 V24 H2 Z" fill="#f4f4f4" stroke="#999"/><rect x="3" y="13" width="15" height="10" fill="#60c040"/><path d="M5 6 V14 M7 6 V14" stroke="#222" stroke-width="1"/><path d="M9 8 H12" stroke="#222" stroke-width="1"/><path d="M13 20 L21 6" stroke="#f0b030" stroke-width="2.5"/><path d="M21 6 L22 3.5" stroke="#d04040" stroke-width="2.5"/></svg>
<div class="a" style="left:779px;top:1040px;width:48px;height:40px;background:#3b4a55"></div>
<svg class="a" style="left:790px;top:1048px" width="25" height="24" viewBox="0 0 16 16"><rect x="0.5" y="0.5" width="15" height="15" rx="2" fill="#4d4d4d" stroke="#3fb0d8"/><path d="M2.5 12.5 L7 3.5 M2.5 12.5 H6.5" stroke="#f5a830" stroke-width="1.2" fill="none"/><path d="M7 13 L8.5 4 L9.5 4.5 L8.5 13 Z" fill="#fff"/><path d="M11 2 V11" stroke="#e83050" stroke-width="1.6"/><path d="M11 2 V3 M11 5 V6 M11 8 V9" stroke="#40a8c8" stroke-width="1.6"/><path d="M11 10 L14.5 13.5" stroke="#fff" stroke-width="1"/><path d="M8.5 15 Q11 10 13.5 15 Z" fill="#3aa8d0"/><circle cx="11" cy="13.5" r="1" fill="#f5a830"/></svg>
<svg class="a" style="left:838px;top:1049px" width="26" height="22" viewBox="0 0 26 22"><path d="M7 3 H25 L21 19 H3 Z" fill="#4aa8f0"/><path d="M9 5 H22 L19 17 H6 Z" fill="#a8d8ff"/><rect x="11" y="9" width="7" height="3" fill="#2060c0"/><path d="M0 7 H6 M1 11 H5 M0 15 H4" stroke="#6ab8f8" stroke-width="1"/></svg>
<div class="a" style="left:440px;top:1078px;width:31px;height:2px;background:#76b9ed"></div>
<div class="a" style="left:472px;top:1078px;width:8px;height:2px;background:#76b9ed"></div>
<div class="a" style="left:538px;top:1078px;width:40px;height:2px;background:#76b9ed"></div>
<div class="a" style="left:587px;top:1078px;width:40px;height:2px;background:#76b9ed"></div>
<div class="a" style="left:636px;top:1078px;width:40px;height:2px;background:#76b9ed"></div>
<div class="a" style="left:685px;top:1078px;width:40px;height:2px;background:#76b9ed"></div>
<div class="a" style="left:734px;top:1078px;width:40px;height:2px;background:#76b9ed"></div>
<div class="a" style="left:779px;top:1078px;width:48px;height:2px;background:#76b9ed"></div>
<div class="a" style="left:832px;top:1078px;width:40px;height:2px;background:#76b9ed"></div>
<svg class="a" style="left:1674px;top:1053px" width="14" height="10" viewBox="0 0 14 10"><path d="M1.5 8 L7 2.5 L12.5 8" fill="none" stroke="#fff" stroke-width="1.3"/></svg>
<svg class="a" style="left:1696px;top:1052px" width="20" height="14" viewBox="0 0 20 14"><path d="M2.5 1 V3.5 M5.5 1 V3.5" stroke="#fff" stroke-width="1.2"/><path d="M1 3.5 H7 V6.5 Q7 8.5 4 8.5 Q1 8.5 1 6.5 Z" fill="#fff"/><path d="M4 8.5 V13" stroke="#fff" stroke-width="1.2"/><rect x="6.6" y="4.6" width="10.8" height="7.8" fill="none" stroke="#fff" stroke-width="1.2"/><rect x="17.5" y="6.5" width="1.5" height="4" fill="#fff"/><rect x="8" y="6" width="8" height="5" fill="#fff"/></svg>
<svg class="a" style="left:1723px;top:1053px" width="16" height="14" viewBox="0 0 16 14"><path d="M1 12.5 A11 11 0 0 1 12 1.5 M3.5 12.5 A8.5 8.5 0 0 1 12 4 M6 12.5 A6 6 0 0 1 12 6.5" fill="none" stroke="#fff" stroke-width="1"/><circle cx="11" cy="12" r="1.5" fill="#fff"/></svg>
<svg class="a" style="left:1744px;top:1052px" width="18" height="16" viewBox="0 0 18 16"><path d="M1.5 5 H4.5 L8.5 1.5 V13.5 L4.5 10 H1.5 Z" fill="none" stroke="#fff" stroke-width="1.1"/><path d="M11 5 Q12.5 7.5 11 10 M13 3 Q15.5 7.5 13 12 M15 1 Q18.5 7.5 15 14" fill="none" stroke="#9aa0aa" stroke-width="1"/></svg>
<div style="position:absolute;left:1768px;top:1050px;font-size:18px;color:#fff;white-space:nowrap;line-height:1;">A</div>
<div class="t" style="left:1784px;width:84px;text-align:center;top:1045px;font-size:12.5px;color:#fff">오전 10:50</div>
<div class="t" style="left:1784px;width:84px;text-align:center;top:1063px;font-size:12.5px;color:#fff">2025-08-21</div>
<svg class="a" style="left:1876px;top:1049px" width="30" height="30" viewBox="0 0 30 30"><path d="M3 3 H20 V16 H9 L6 19 V16 H3 Z" fill="#fff"/><path d="M6 6.5 H17 M6 9.5 H17 M6 12.5 H13" stroke="#1b2541" stroke-width="1.2"/><circle cx="18" cy="19" r="7.5" fill="#2e3442" stroke="#8a8f99" stroke-width="1"/><text x="18" y="23.5" font-size="12" fill="#fff" text-anchor="middle" font-family="Liberation Sans">3</text></svg>
<div class="a" style="left:1914px;top:1040px;width:1px;height:40px;background:#4b5160"></div>
</body></html>
